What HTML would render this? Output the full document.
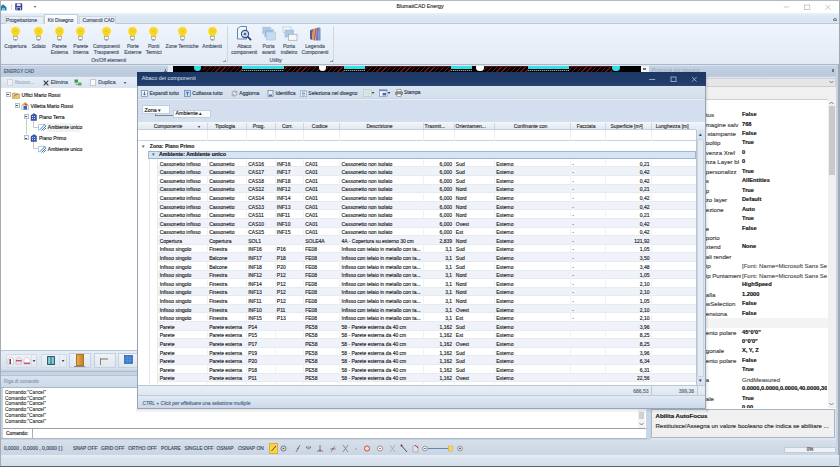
<!DOCTYPE html><html><head><meta charset="utf-8"><style>
html,body{margin:0;padding:0;}
body{width:840px;height:467px;overflow:hidden;position:relative;background:#dde6f1;font-family:"Liberation Sans",sans-serif;font-size:5px;color:#333;-webkit-text-stroke-width:0.15px;}
div{position:absolute;box-sizing:border-box;}
.t{white-space:nowrap;line-height:1;transform:translateY(-50%);}
.r{white-space:nowrap;line-height:1;transform:translate(-100%,-50%);}
.c{white-space:nowrap;line-height:1;transform:translate(-50%,-50%);text-align:center;}
</style></head><body>
<div style="left:0px;top:0px;width:840px;height:1px;background:#b8b8b8"></div>
<div style="left:0px;top:1px;width:840px;height:12px;background:#ffffff"></div>
<svg style="position:absolute;left:0px;top:3px" width="7" height="8" viewBox="0 0 7 8"><path d="M0 7.5V4L3 1.2L6.5 4.2V7.5H4.6V5.2H2.2V7.5z" fill="#1f7fb0"/><path d="M2.2 5.2h2.4v2.3H2.2z" fill="#5ac0e8"/></svg>
<div style="left:10.5px;top:4px;width:0.6px;height:6px;background:#d8d8d8"></div>
<svg style="position:absolute;left:15px;top:3px" width="7.5" height="7.5" viewBox="0 0 7.5 7.5"><rect x="0.2" y="0.2" width="7" height="7" rx="0.6" fill="#3b3f8f"/><rect x="1.8" y="0.6" width="3.8" height="2.4" fill="#e8eaf6"/><rect x="1.5" y="4.2" width="4.5" height="3" fill="#c8cce8"/><rect x="2.3" y="4.8" width="2.8" height="2.4" fill="#3b3f8f"/></svg>
<div class="t" style="left:34px;top:7px;font-size:4px;color:#555">▾</div>
<div class="c" style="left:420px;top:7.3px;font-size:5.3px;color:#333">BlumatiCAD Energy</div>
<svg style="position:absolute;left:782px;top:3px" width="52" height="9" viewBox="0 0 52 9"><path d="M1.8 4h5" stroke="#b4b4b4" stroke-width="0.7"/><rect x="22.4" y="2" width="5.4" height="4.6" fill="none" stroke="#b4b4b4" stroke-width="0.7"/><path d="M43.3 2l5.2 4.6M48.5 2l-5.2 4.6" stroke="#b4b4b4" stroke-width="0.7"/></svg>
<div style="left:1px;top:13px;width:838px;height:11px;background:linear-gradient(#e9f1fa,#dce7f4 30%,#d9e5f3)"></div>
<div style="left:1px;top:23.3px;width:838px;height:1px;background:#bccad9"></div>
<div style="left:4.5px;top:15.5px;width:39px;height:8.5px;background:linear-gradient(#e9f0f8,#e2eaf4);border:0.7px solid #cdd8e4;border-bottom:none"></div>
<div class="c" style="left:21.5px;top:20px;color:#4a5566">Progettazione</div>
<div style="left:43.5px;top:14px;width:34.5px;height:10.5px;background:linear-gradient(#fbfdff,#eef5fc);border:0.8px solid #bfcddc;border-bottom:none"></div>
<div class="c" style="left:60.5px;top:19.8px;color:#3a4556">Kit Disegno</div>
<div style="left:78.5px;top:15.5px;width:37px;height:8.5px;background:linear-gradient(#e9f0f8,#e2eaf4);border:0.7px solid #cdd8e4;border-bottom:none"></div>
<div class="c" style="left:98.5px;top:20px;color:#4a5566">Comandi CAD</div>
<div style="left:832px;top:17px;width:6px;height:5px;background:transparent"><div style="left:1px;top:1px;width:4px;height:3px;border:0.7px solid #777;border-radius:2px 2px 0 0"></div></div>
<div style="left:1px;top:24px;width:838px;height:41px;background:linear-gradient(#eef5fd 0%,#e9f0f9 40%,#e3eaf4 100%)"></div>
<div style="left:1px;top:63.6px;width:838px;height:1.6px;background:#a9b8ca"></div>
<svg style="position:absolute;left:9.9px;top:26px" width="11" height="15" viewBox="0 0 11 15">
<path d="M5.5 0.3C2.4 0.3 0.4 2.3 0.4 4.9c0 2.3 1.6 3.6 2.3 5.2v1h5.6v-1c0.7-1.6 2.3-2.9 2.3-5.2C10.6 2.3 8.6 0.3 5.5 0.3z" fill="#fbf0a8"/>
<path d="M5.5 1.2C3 1.2 1.3 2.9 1.3 5c0 2 1.5 3.2 2.1 4.7v0.8h4.2V9.7c0.6-1.5 2.1-2.7 2.1-4.7C9.7 2.9 8 1.2 5.5 1.2z" fill="#f4d62a"/>
<path d="M4 4.5l1.5 1.5 1.5-1.5" fill="none" stroke="#e0a818" stroke-width="0.5"/>
<rect x="3.7" y="10.5" width="3.6" height="3" fill="#f4f4f4" stroke="#8a8a8a" stroke-width="0.5"/>
<rect x="4.3" y="13.5" width="2.4" height="1" fill="#7a7a7a"/>
</svg>
<div class="c" style="left:15.4px;top:46.0px;color:#465266">Copertura</div>
<svg style="position:absolute;left:33.1px;top:26px" width="11" height="15" viewBox="0 0 11 15">
<path d="M5.5 0.3C2.4 0.3 0.4 2.3 0.4 4.9c0 2.3 1.6 3.6 2.3 5.2v1h5.6v-1c0.7-1.6 2.3-2.9 2.3-5.2C10.6 2.3 8.6 0.3 5.5 0.3z" fill="#fbf0a8"/>
<path d="M5.5 1.2C3 1.2 1.3 2.9 1.3 5c0 2 1.5 3.2 2.1 4.7v0.8h4.2V9.7c0.6-1.5 2.1-2.7 2.1-4.7C9.7 2.9 8 1.2 5.5 1.2z" fill="#f4d62a"/>
<path d="M4 4.5l1.5 1.5 1.5-1.5" fill="none" stroke="#e0a818" stroke-width="0.5"/>
<rect x="3.7" y="10.5" width="3.6" height="3" fill="#f4f4f4" stroke="#8a8a8a" stroke-width="0.5"/>
<rect x="4.3" y="13.5" width="2.4" height="1" fill="#7a7a7a"/>
</svg>
<div class="c" style="left:38.6px;top:46.0px;color:#465266">Solaio</div>
<svg style="position:absolute;left:53.8px;top:26px" width="11" height="15" viewBox="0 0 11 15">
<path d="M5.5 0.3C2.4 0.3 0.4 2.3 0.4 4.9c0 2.3 1.6 3.6 2.3 5.2v1h5.6v-1c0.7-1.6 2.3-2.9 2.3-5.2C10.6 2.3 8.6 0.3 5.5 0.3z" fill="#fbf0a8"/>
<path d="M5.5 1.2C3 1.2 1.3 2.9 1.3 5c0 2 1.5 3.2 2.1 4.7v0.8h4.2V9.7c0.6-1.5 2.1-2.7 2.1-4.7C9.7 2.9 8 1.2 5.5 1.2z" fill="#f4d62a"/>
<path d="M4 4.5l1.5 1.5 1.5-1.5" fill="none" stroke="#e0a818" stroke-width="0.5"/>
<rect x="3.7" y="10.5" width="3.6" height="3" fill="#f4f4f4" stroke="#8a8a8a" stroke-width="0.5"/>
<rect x="4.3" y="13.5" width="2.4" height="1" fill="#7a7a7a"/>
</svg>
<div class="c" style="left:59.3px;top:46.0px;color:#465266">Parete</div>
<div class="c" style="left:59.3px;top:51.9px;color:#465266">Esterna</div>
<svg style="position:absolute;left:75.2px;top:26px" width="11" height="15" viewBox="0 0 11 15">
<path d="M5.5 0.3C2.4 0.3 0.4 2.3 0.4 4.9c0 2.3 1.6 3.6 2.3 5.2v1h5.6v-1c0.7-1.6 2.3-2.9 2.3-5.2C10.6 2.3 8.6 0.3 5.5 0.3z" fill="#fbf0a8"/>
<path d="M5.5 1.2C3 1.2 1.3 2.9 1.3 5c0 2 1.5 3.2 2.1 4.7v0.8h4.2V9.7c0.6-1.5 2.1-2.7 2.1-4.7C9.7 2.9 8 1.2 5.5 1.2z" fill="#f4d62a"/>
<path d="M4 4.5l1.5 1.5 1.5-1.5" fill="none" stroke="#e0a818" stroke-width="0.5"/>
<rect x="3.7" y="10.5" width="3.6" height="3" fill="#f4f4f4" stroke="#8a8a8a" stroke-width="0.5"/>
<rect x="4.3" y="13.5" width="2.4" height="1" fill="#7a7a7a"/>
</svg>
<div class="c" style="left:80.7px;top:46.0px;color:#465266">Parete</div>
<div class="c" style="left:80.7px;top:51.9px;color:#465266">Interna</div>
<svg style="position:absolute;left:100.9px;top:26px" width="11" height="15" viewBox="0 0 11 15">
<path d="M5.5 0.3C2.4 0.3 0.4 2.3 0.4 4.9c0 2.3 1.6 3.6 2.3 5.2v1h5.6v-1c0.7-1.6 2.3-2.9 2.3-5.2C10.6 2.3 8.6 0.3 5.5 0.3z" fill="#fbf0a8"/>
<path d="M5.5 1.2C3 1.2 1.3 2.9 1.3 5c0 2 1.5 3.2 2.1 4.7v0.8h4.2V9.7c0.6-1.5 2.1-2.7 2.1-4.7C9.7 2.9 8 1.2 5.5 1.2z" fill="#f4d62a"/>
<path d="M4 4.5l1.5 1.5 1.5-1.5" fill="none" stroke="#e0a818" stroke-width="0.5"/>
<rect x="3.7" y="10.5" width="3.6" height="3" fill="#f4f4f4" stroke="#8a8a8a" stroke-width="0.5"/>
<rect x="4.3" y="13.5" width="2.4" height="1" fill="#7a7a7a"/>
</svg>
<div class="c" style="left:106.4px;top:46.0px;color:#465266">Componenti</div>
<div class="c" style="left:106.4px;top:51.9px;color:#465266">Trasparenti</div>
<svg style="position:absolute;left:127.4px;top:26px" width="11" height="15" viewBox="0 0 11 15">
<path d="M5.5 0.3C2.4 0.3 0.4 2.3 0.4 4.9c0 2.3 1.6 3.6 2.3 5.2v1h5.6v-1c0.7-1.6 2.3-2.9 2.3-5.2C10.6 2.3 8.6 0.3 5.5 0.3z" fill="#fbf0a8"/>
<path d="M5.5 1.2C3 1.2 1.3 2.9 1.3 5c0 2 1.5 3.2 2.1 4.7v0.8h4.2V9.7c0.6-1.5 2.1-2.7 2.1-4.7C9.7 2.9 8 1.2 5.5 1.2z" fill="#f4d62a"/>
<path d="M4 4.5l1.5 1.5 1.5-1.5" fill="none" stroke="#e0a818" stroke-width="0.5"/>
<rect x="3.7" y="10.5" width="3.6" height="3" fill="#f4f4f4" stroke="#8a8a8a" stroke-width="0.5"/>
<rect x="4.3" y="13.5" width="2.4" height="1" fill="#7a7a7a"/>
</svg>
<div class="c" style="left:132.9px;top:46.0px;color:#465266">Porte</div>
<div class="c" style="left:132.9px;top:51.9px;color:#465266">Esterne</div>
<svg style="position:absolute;left:148.1px;top:26px" width="11" height="15" viewBox="0 0 11 15">
<path d="M5.5 0.3C2.4 0.3 0.4 2.3 0.4 4.9c0 2.3 1.6 3.6 2.3 5.2v1h5.6v-1c0.7-1.6 2.3-2.9 2.3-5.2C10.6 2.3 8.6 0.3 5.5 0.3z" fill="#fbf0a8"/>
<path d="M5.5 1.2C3 1.2 1.3 2.9 1.3 5c0 2 1.5 3.2 2.1 4.7v0.8h4.2V9.7c0.6-1.5 2.1-2.7 2.1-4.7C9.7 2.9 8 1.2 5.5 1.2z" fill="#f4d62a"/>
<path d="M4 4.5l1.5 1.5 1.5-1.5" fill="none" stroke="#e0a818" stroke-width="0.5"/>
<rect x="3.7" y="10.5" width="3.6" height="3" fill="#f4f4f4" stroke="#8a8a8a" stroke-width="0.5"/>
<rect x="4.3" y="13.5" width="2.4" height="1" fill="#7a7a7a"/>
</svg>
<div class="c" style="left:153.6px;top:46.0px;color:#465266">Ponti</div>
<div class="c" style="left:153.6px;top:51.9px;color:#465266">Termici</div>
<svg style="position:absolute;left:176.6px;top:26px" width="11" height="15" viewBox="0 0 11 15">
<path d="M5.5 0.3C2.4 0.3 0.4 2.3 0.4 4.9c0 2.3 1.6 3.6 2.3 5.2v1h5.6v-1c0.7-1.6 2.3-2.9 2.3-5.2C10.6 2.3 8.6 0.3 5.5 0.3z" fill="#fbf0a8"/>
<path d="M5.5 1.2C3 1.2 1.3 2.9 1.3 5c0 2 1.5 3.2 2.1 4.7v0.8h4.2V9.7c0.6-1.5 2.1-2.7 2.1-4.7C9.7 2.9 8 1.2 5.5 1.2z" fill="#f4d62a"/>
<path d="M4 4.5l1.5 1.5 1.5-1.5" fill="none" stroke="#e0a818" stroke-width="0.5"/>
<rect x="3.7" y="10.5" width="3.6" height="3" fill="#f4f4f4" stroke="#8a8a8a" stroke-width="0.5"/>
<rect x="4.3" y="13.5" width="2.4" height="1" fill="#7a7a7a"/>
</svg>
<div class="c" style="left:182.1px;top:46.0px;color:#465266">Zone Termiche</div>
<svg style="position:absolute;left:206.6px;top:26px" width="11" height="15" viewBox="0 0 11 15">
<path d="M5.5 0.3C2.4 0.3 0.4 2.3 0.4 4.9c0 2.3 1.6 3.6 2.3 5.2v1h5.6v-1c0.7-1.6 2.3-2.9 2.3-5.2C10.6 2.3 8.6 0.3 5.5 0.3z" fill="#fbf0a8"/>
<path d="M5.5 1.2C3 1.2 1.3 2.9 1.3 5c0 2 1.5 3.2 2.1 4.7v0.8h4.2V9.7c0.6-1.5 2.1-2.7 2.1-4.7C9.7 2.9 8 1.2 5.5 1.2z" fill="#f4d62a"/>
<path d="M4 4.5l1.5 1.5 1.5-1.5" fill="none" stroke="#e0a818" stroke-width="0.5"/>
<rect x="3.7" y="10.5" width="3.6" height="3" fill="#f4f4f4" stroke="#8a8a8a" stroke-width="0.5"/>
<rect x="4.3" y="13.5" width="2.4" height="1" fill="#7a7a7a"/>
</svg>
<div class="c" style="left:212.1px;top:46.0px;color:#465266">Ambienti</div>
<div class="c" style="left:108.7px;top:60px;color:#46566e">On/Off elementi</div>
<div style="left:222px;top:58.5px;width:4px;height:4px;"><div style="left:1px;top:1px;width:2.5px;height:2.5px;border-right:0.6px solid #8a98aa;border-bottom:0.6px solid #8a98aa"></div></div>
<div style="left:226.5px;top:26px;width:0.8px;height:37px;background:#cdd8e4"></div>
<div class="c" style="left:244.3px;top:46.0px;color:#465266">Abaco</div>
<div class="c" style="left:244.3px;top:51.9px;color:#465266">componenti</div>
<div class="c" style="left:268.6px;top:46.0px;color:#465266">Porta</div>
<div class="c" style="left:268.6px;top:51.9px;color:#465266">avanti</div>
<div class="c" style="left:289px;top:46.0px;color:#465266">Porta</div>
<div class="c" style="left:289px;top:51.9px;color:#465266">indietro</div>
<div class="c" style="left:315px;top:46.0px;color:#465266">Legenda</div>
<div class="c" style="left:315px;top:51.9px;color:#465266">Componenti</div>
<div class="c" style="left:275.7px;top:60px;color:#46566e">Utility</div>
<div style="left:329px;top:58.5px;width:4px;height:4px;"><div style="left:1px;top:1px;width:2.5px;height:2.5px;border-right:0.6px solid #8a98aa;border-bottom:0.6px solid #8a98aa"></div></div>
<div style="left:333px;top:26px;width:0.8px;height:37px;background:#cdd8e4"></div>
<svg style="position:absolute;left:236px;top:26px" width="17" height="15" viewBox="0 0 17 15">
<path d="M1.5 2.5l3-2h6v12.5h-9z" fill="#f4f8fc" stroke="#4a78b0" stroke-width="0.9"/>
<circle cx="9" cy="8" r="3.6" fill="#cfe0f0" stroke="#2c4e80" stroke-width="1.1"/>
<circle cx="9" cy="8" r="1.3" fill="#6a4aa0"/>
<path d="M11.6 10.6l3.5 3.5" stroke="#24406a" stroke-width="1.6"/>
</svg>
<svg style="position:absolute;left:261px;top:26px" width="16" height="15" viewBox="0 0 16 15">
<rect x="1.5" y="1" width="8.5" height="7" fill="#a9c6e4" stroke="#c5d5e6" stroke-width="0.6"/>
<rect x="3.5" y="3.5" width="9" height="7.5" fill="#94bbe2" stroke="#c0d2e6" stroke-width="0.6"/>
<rect x="5.5" y="6" width="9" height="8" fill="#c4dcf2" stroke="#b8c8d8" stroke-width="0.7"/>
</svg>
<svg style="position:absolute;left:282px;top:26px" width="16" height="15" viewBox="0 0 16 15">
<rect x="1" y="1" width="8" height="5.5" fill="#f4f6f8" stroke="#b4c0cc" stroke-width="0.6"/>
<rect x="3" y="4" width="8.5" height="7" fill="#a9cae8" stroke="#9ab6d0" stroke-width="0.6"/>
<rect x="6.5" y="8.3" width="8.5" height="6" fill="#f6f6f6" stroke="#9aaabb" stroke-width="0.7"/>
</svg>
<svg style="position:absolute;left:308px;top:26px;opacity:0.8" width="14" height="15" viewBox="0 0 14 15">
<path d="M2 3.5l9-2.5v2l-9 3z" fill="#d8d0c0"/>
<path d="M2 4.5l3-1.5 -1 11-2-1z" fill="#3a3a6a"/>
<path d="M5 3.5l2-0.8 -1.5 11.5-1.5-0.5z" fill="#e07a30"/>
<path d="M7 2.7l2-0.7 -2 12.5-1.5-0.3z" fill="#b83a3a"/>
<path d="M9 2l2-0.5 -1 13h-2.5z" fill="#6a4a9a"/>
<path d="M11 1.5l1.5 0.3v12.7h-2.5z" fill="#3a8ab8"/>
</svg>
<div style="left:641px;top:66px;width:8px;height:6px;background:#f4f4f4"></div>
<div style="left:642.5px;top:68px;width:3px;height:2px;background:#777"></div>
<div style="left:173px;top:66px;width:468px;height:10px;background:#000;overflow:hidden"><div style="left:30px;top:0px;width:39px;height:6px;background:repeating-linear-gradient(135deg,#000 0 1.7px,#6a1818 1.7px 2.7px,#000 2.7px 3.4px);border-top:1.2px solid #561212"></div><div style="left:111px;top:0px;width:36px;height:6px;background:repeating-linear-gradient(135deg,#000 0 1.7px,#6a1818 1.7px 2.7px,#000 2.7px 3.4px);border-top:1.2px solid #561212"></div><div style="left:152px;top:0px;width:19px;height:6px;background:repeating-linear-gradient(135deg,#000 0 1.7px,#6a1818 1.7px 2.7px,#000 2.7px 3.4px);border-top:1.2px solid #561212"></div><div style="left:191px;top:0px;width:87px;height:6px;background:repeating-linear-gradient(135deg,#000 0 1.7px,#6a1818 1.7px 2.7px,#000 2.7px 3.4px);border-top:1.2px solid #561212"></div><div style="left:311px;top:0px;width:44px;height:6px;background:repeating-linear-gradient(135deg,#000 0 1.7px,#6a1818 1.7px 2.7px,#000 2.7px 3.4px);border-top:1.2px solid #561212"></div><div style="left:396px;top:0px;width:43px;height:6px;background:repeating-linear-gradient(135deg,#000 0 1.7px,#6a1818 1.7px 2.7px,#000 2.7px 3.4px);border-top:1.2px solid #561212"></div><div style="left:69px;top:-0.20000000000000284px;width:42px;height:3.2px;background:#34e0e6"></div><div style="left:69px;top:3.799999999999997px;width:42px;height:1.2px;background:repeating-linear-gradient(90deg,#a0a0a0 0 1px,#333 1px 2px)"></div><div style="left:171px;top:-0.20000000000000284px;width:20.5px;height:3.2px;background:#34e0e6"></div><div style="left:171px;top:3.799999999999997px;width:20.5px;height:1.2px;background:repeating-linear-gradient(90deg,#a0a0a0 0 1px,#333 1px 2px)"></div><div style="left:278px;top:-0.20000000000000284px;width:21px;height:3.2px;background:#34e0e6"></div><div style="left:278px;top:3.799999999999997px;width:21px;height:1.2px;background:repeating-linear-gradient(90deg,#a0a0a0 0 1px,#333 1px 2px)"></div><div style="left:355px;top:-0.20000000000000284px;width:41px;height:3.2px;background:#34e0e6"></div><div style="left:355px;top:3.799999999999997px;width:41px;height:1.2px;background:repeating-linear-gradient(90deg,#a0a0a0 0 1px,#333 1px 2px)"></div><div style="left:20.900000000000006px;top:-2px;width:7.2px;height:7.2px;background:#30e0e6;border-radius:50%"></div><div style="left:439.4px;top:-2px;width:7.2px;height:7.2px;background:#30e0e6;border-radius:50%"></div><div style="left:145.89999999999998px;top:-2px;width:7.2px;height:7.2px;background:#ffffff;border-radius:50%"></div><div style="left:303.4px;top:-2px;width:7.2px;height:7.2px;background:#ffffff;border-radius:50%"></div></div>
<div style="left:0px;top:1px;width:1px;height:466px;background:#a4acb6"></div>
<div style="left:1px;top:65.2px;width:170px;height:12px;background:linear-gradient(#dae3ee 0,#dae3ee 0.8px,#c3d1e2 1.2px,#b9cadc 80%,#c2d0e1)"></div>
<div class="t" style="left:3.8px;top:72px;font-size:4.6px;color:#4a5c76">ENERGY CAD</div>
<div style="left:168px;top:65.2px;width:5px;height:12px;background:#e4ebf3"></div>
<div style="left:164.8px;top:68.8px;width:1.6px;height:2.6px;background:#6a7888"></div>
<div style="left:164.2px;top:71.2px;width:2.8px;height:0.6px;background:#6a7888"></div>
<div style="left:1px;top:77px;width:170px;height:11px;background:linear-gradient(#e6eef8,#d9e4f1)"></div>
<div style="left:6.5px;top:79.2px;width:6px;height:6.5px;background:#eef0f3;border:0.6px solid #d0d4da"></div>
<div class="t" style="left:15px;top:82.6px;color:#a8b0bc;font-size:5.2px">Nuovo...</div>
<svg style="position:absolute;left:42.5px;top:79.5px" width="6" height="6" viewBox="0 0 6 6"><path d="M0.7 0.7L5.3 5.3M5.3 0.7L0.7 5.3" stroke="#333" stroke-width="1.1"/></svg>
<div class="t" style="left:50.8px;top:83px;color:#3e4c62;font-size:5.2px">Elimina</div>
<svg style="position:absolute;left:74px;top:79px" width="8" height="7" viewBox="0 0 8 7"><rect x="0.5" y="0.5" width="3.5" height="3" fill="#3a9a4a"/><rect x="4" y="3.5" width="3.5" height="3" fill="#5ab05a"/><path d="M2 3.5v2h2" stroke="#555" stroke-width="0.5" fill="none"/></svg>
<div style="left:90px;top:79px;width:6px;height:7px;background:#fbfbfb;border:0.6px solid #c8c8c8"></div>
<div class="t" style="left:98.3px;top:83px;color:#3e4c62;font-size:5.2px">Duplica</div>
<div class="c" style="left:125px;top:82.5px;font-size:4px;color:#444">▾</div>
<div style="left:1px;top:88px;width:170px;height:262px;background:#ffffff"></div>
<div style="left:5.5px;top:92.2px;width:5px;height:5px;background:#f2f4f6;border:1px solid #b4bcc6"><div style="left:0.5px;top:1.2px;width:2px;height:0.8px;background:#555"></div></div>
<svg style="position:absolute;left:12px;top:90.5px" width="8" height="8" viewBox="0 0 8 8"><path d="M0.5 2h3l1 1h3v4.5h-7z" fill="#e8c860" stroke="#a88a30" stroke-width="0.5"/><path d="M2 5.5c1-2 3-2 4-3" stroke="#4a6a9a" stroke-width="0.8" fill="none"/></svg>
<div class="t" style="left:21.6px;top:94.8px;color:#222">Uffici Mario Rossi</div>
<div style="left:14.5px;top:103.2px;width:5px;height:5px;background:#f2f4f6;border:1px solid #b4bcc6"><div style="left:0.5px;top:1.2px;width:2px;height:0.8px;background:#555"></div></div>
<svg style="position:absolute;left:21px;top:101.7px" width="8" height="8" viewBox="0 0 8 8"><path d="M4 0.5L7.5 3.5V7.5H0.5V3.5z" fill="#f4f4f4" stroke="#888" stroke-width="0.4"/><path d="M4 0.5L7.5 3.5H4z" fill="#e04a2a"/><path d="M0.5 3.5L4 0.5V3.5z" fill="#f0a030"/><rect x="2.5" y="4" width="3.5" height="3.5" fill="#2a6ac0"/></svg>
<div class="t" style="left:30.5px;top:105.8px;color:#222">Villetta Mario Rossi</div>
<div style="left:25.5px;top:119px;width:0.8px;height:15px;background:#c9c9c9"></div>
<div style="left:33.3px;top:120.5px;width:0.8px;height:6.8px;background:#c9c9c9"></div>
<div style="left:33.3px;top:127px;width:4.5px;height:0.8px;background:#c9c9c9"></div>
<div style="left:33.3px;top:141.3px;width:0.8px;height:7px;background:#c9c9c9"></div>
<div style="left:33.3px;top:147.8px;width:4.5px;height:0.8px;background:#c9c9c9"></div>
<div style="left:23.5px;top:114.2px;width:5px;height:5px;background:#f2f4f6;border:1px solid #b4bcc6"><div style="left:0.5px;top:1.2px;width:2px;height:0.8px;background:#555"></div></div>
<svg style="position:absolute;left:30px;top:112.7px" width="7" height="8" viewBox="0 0 7 8"><path d="M1 2.5L4 0.5L6.5 2V7.5H1z" fill="#3a5ab0" stroke="#1a3080" stroke-width="0.4"/><rect x="2" y="3" width="1" height="1" fill="#cde"/><rect x="4" y="3" width="1" height="1" fill="#cde"/><rect x="2" y="5" width="1" height="1" fill="#cde"/><rect x="4" y="5" width="1" height="1" fill="#cde"/></svg>
<div class="t" style="left:39px;top:116.7px;color:#222">Piano Terra</div>
<svg style="position:absolute;left:37.8px;top:123.3px" width="9" height="8" viewBox="0 0 9 8"><path d="M0.5 7.5V1.5h6" fill="none" stroke="#8ab8e0" stroke-width="0.7"/><path d="M1.5 7L6.5 2M3.5 7.5L8 3M5.5 7.5L8 5" stroke="#2f6fb8" stroke-width="0.9"/><path d="M6 0.8l2 2" stroke="#2f6fb8" stroke-width="0.8"/></svg>
<div style="left:46.5px;top:122.5px;width:33.5px;height:9px;background:#f0f2f5"></div>
<div class="t" style="left:47.8px;top:127.4px;color:#222">Ambiente unico</div>
<div style="left:23.5px;top:135.4px;width:5px;height:5px;background:#f2f4f6;border:1px solid #b4bcc6"><div style="left:0.5px;top:1.2px;width:2px;height:0.8px;background:#555"></div></div>
<svg style="position:absolute;left:30px;top:133.8px" width="7" height="8" viewBox="0 0 7 8"><path d="M1 2.5L4 0.5L6.5 2V7.5H1z" fill="#3a5ab0" stroke="#1a3080" stroke-width="0.4"/><rect x="2" y="3" width="1" height="1" fill="#cde"/><rect x="4" y="3" width="1" height="1" fill="#cde"/><rect x="2" y="5" width="1" height="1" fill="#cde"/><rect x="4" y="5" width="1" height="1" fill="#cde"/></svg>
<div class="t" style="left:39px;top:138.3px;color:#222">Piano Primo</div>
<svg style="position:absolute;left:37.8px;top:144.5px" width="9" height="8" viewBox="0 0 9 8"><path d="M0.5 7.5V1.5h6" fill="none" stroke="#8ab8e0" stroke-width="0.7"/><path d="M1.5 7L6.5 2M3.5 7.5L8 3M5.5 7.5L8 5" stroke="#2f6fb8" stroke-width="0.9"/><path d="M6 0.8l2 2" stroke="#2f6fb8" stroke-width="0.8"/></svg>
<div class="t" style="left:47.8px;top:149px;color:#222">Ambiente unico</div>
<div style="left:1px;top:350px;width:170px;height:19px;background:linear-gradient(#e6edf6,#d8e2ef)"></div>
<div style="left:1px;top:350px;width:170px;height:1px;background:#b9c5d3"></div>
<div style="left:5.8px;top:353.5px;width:31.7px;height:14px;background:linear-gradient(#edf2f8,#dfe7f1);border:0.5px solid #d0d9e4;border-radius:1px"></div>
<div style="left:31px;top:354px;width:0.5px;height:13px;background:#d8e0ea"></div>
<svg style="position:absolute;left:7px;top:356px" width="24" height="9" viewBox="0 0 24 9"><path d="M1 3.5L3.8 1L6.6 3.5V8H1z" fill="#fff" stroke="#b0a0a8" stroke-width="0.5"/><path d="M3.2 3v5" stroke="#701828" stroke-width="1.3"/><path d="M9 3.5L11.8 1L14.6 3.5V8H9z" fill="#f8e8ec" stroke="#b0a0a8" stroke-width="0.5"/><path d="M9 4.8h5.6" stroke="#c02040" stroke-width="1.1"/><path d="M17 3.5L20 1L23 3.5V8H17z" fill="#fff" stroke="#b8a8b0" stroke-width="0.5"/><path d="M17 7.2h6" stroke="#c02040" stroke-width="1.1"/></svg>
<div class="c" style="left:34.2px;top:360.8px;font-size:4px;color:#222">▾</div>
<div style="left:41px;top:353.5px;width:25.5px;height:14px;background:linear-gradient(#edf2f8,#dfe7f1);border:0.5px solid #d0d9e4;border-radius:1px"></div>
<div style="left:59px;top:354px;width:0.5px;height:13px;background:#d8e0ea"></div>
<svg style="position:absolute;left:46.5px;top:355.5px" width="8" height="9" viewBox="0 0 8 9"><rect x="0.6" y="0.6" width="6.8" height="7.8" fill="#80d0e0" stroke="#2a5060" stroke-width="1"/><path d="M4 0.6v7.8" stroke="#2a5060" stroke-width="0.9"/></svg>
<div class="c" style="left:62.8px;top:360.8px;font-size:4px;color:#222">▾</div>
<div style="left:69px;top:352.5px;width:22px;height:15.5px;background:linear-gradient(#eef3f9,#dfe7f1);border:0.5px solid #c5d0dd"></div>
<div style="left:75.5px;top:354px;width:8.3px;height:12px;background:linear-gradient(90deg,#e6a850,#c88030);border:0.5px solid #b07020"></div>
<div style="left:74px;top:366px;width:11px;height:1px;background:#8a8a8a"></div>
<div style="left:94px;top:352.5px;width:22px;height:15.5px;background:linear-gradient(#eef3f9,#dfe7f1);border:0.5px solid #c5d0dd"></div>
<div style="left:100px;top:358px;width:1px;height:7px;background:#8a8070"></div>
<div style="left:101px;top:358px;width:7px;height:2px;background:#b8b0a0"></div>
<div style="left:118px;top:352.5px;width:22px;height:15.5px;background:linear-gradient(#eef3f9,#dfe7f1);border:0.5px solid #c5d0dd"></div>
<svg style="position:absolute;left:123.5px;top:355px" width="9" height="9" viewBox="0 0 9 9"><rect x="0.5" y="0.5" width="8" height="8" fill="#3a78c8" stroke="#1a4a90" stroke-width="0.6"/><path d="M3.2 0.5v8M5.8 0.5v8M0.5 3.2h8M0.5 5.8h8" stroke="#7ab0e8" stroke-width="0.4"/></svg>
<div style="left:1px;top:368.5px;width:646px;height:2px;background:#c8d5e4"></div>
<div style="left:1px;top:370.5px;width:646px;height:1.5px;background:#aab9cc"></div>
<div style="left:1px;top:372px;width:646px;height:3px;background:#c5d3e3"></div>
<div style="left:1px;top:375.4px;width:646px;height:1px;background:#b4c2d2"></div>
<div style="left:649px;top:65.2px;width:186.5px;height:12px;background:linear-gradient(#dae3ee 0,#dae3ee 0.8px,#c3d1e2 1.2px,#b9cadc 80%,#c2d0e1)"></div>
<div class="t" style="left:651.5px;top:71px;font-size:5.1px;color:#9aa9bb;-webkit-text-stroke-width:0">Proprietà del disegno</div>
<div style="left:832.2px;top:68.8px;width:1.6px;height:2.6px;background:#6a7888"></div>
<div style="left:831.6px;top:71.2px;width:2.8px;height:0.6px;background:#6a7888"></div>
<div style="left:651px;top:77.5px;width:184.5px;height:9.5px;background:#e6e6e6;border:0.5px solid #cfcfcf"></div>
<svg style="position:absolute;left:828.5px;top:80px" width="5" height="4" viewBox="0 0 5 4"><path d="M0.5 1L2.5 3L4.5 1" fill="none" stroke="#555" stroke-width="0.7"/></svg>
<div style="left:651px;top:87px;width:184.5px;height:11.5px;background:#f0f0f0"></div>
<div style="left:651px;top:98.5px;width:184.5px;height:310.5px;background:#fff;border-top:0.5px solid #d0d0d0"></div>
<div style="left:827.5px;top:99px;width:8.5px;height:309px;background:#f0f0f0"></div>
<div style="left:828.5px;top:106px;width:6.5px;height:69px;background:#c9c9c9"></div>
<svg style="position:absolute;left:829.0px;top:101px" width="5" height="4" viewBox="0 0 5 4"><path d="M0.5 3L2.5 1L4.5 3" fill="none" stroke="#555" stroke-width="0.7"/></svg>
<svg style="position:absolute;left:829.0px;top:402px" width="5" height="4" viewBox="0 0 5 4"><path d="M0.5 1L2.5 3L4.5 1" fill="none" stroke="#555" stroke-width="0.7"/></svg>
<div style="left:706px;top:318.41px;width:121.5px;height:9.4px;background:#f3f3f3"></div>
<div style="left:651px;top:99px;width:89.5px;height:309.2px;overflow:hidden"><div class="t" style="left:54.799999999999955px;top:16.099999999999994px;font-size:6.1px;color:#444">tus</div><div class="t" style="left:54.799999999999955px;top:25.554999999999993px;font-size:6.1px;color:#444">magine salv</div><div class="t" style="left:51.299999999999955px;top:35.00999999999999px;font-size:6.1px;color:#444">e stampante</div><div class="t" style="left:54.799999999999955px;top:44.465px;font-size:6.1px;color:#444">ooltip</div><div class="t" style="left:54.799999999999955px;top:53.91999999999999px;font-size:6.1px;color:#444">venza Xref</div><div class="t" style="left:54.799999999999955px;top:63.375px;font-size:6.1px;color:#444">nza Layer bl</div><div class="t" style="left:51.799999999999955px;top:72.82999999999998px;font-size:6.1px;color:#444">i personalizz</div><div class="t" style="left:54.799999999999955px;top:82.285px;font-size:6.1px;color:#444">s</div><div class="t" style="left:54.799999999999955px;top:91.74000000000001px;font-size:6.1px;color:#444">p</div><div class="t" style="left:54.799999999999955px;top:101.195px;font-size:6.1px;color:#444">zo layer</div><div class="t" style="left:54.799999999999955px;top:110.64999999999998px;font-size:6.1px;color:#444">ezione</div><div class="t" style="left:54.799999999999955px;top:129.56px;font-size:6.1px;color:#444">e</div><div class="t" style="left:54.799999999999955px;top:139.015px;font-size:6.1px;color:#444">porto</div><div class="t" style="left:54.799999999999955px;top:148.47px;font-size:6.1px;color:#444">xtend</div><div class="t" style="left:54.799999999999955px;top:157.92499999999995px;font-size:6.1px;color:#444">ali render</div><div class="t" style="left:54.799999999999955px;top:167.38px;font-size:6.1px;color:#444">ip</div><div class="t" style="left:54.799999999999955px;top:176.83500000000004px;font-size:6.1px;color:#444">ip Puntamento</div><div class="t" style="left:54.799999999999955px;top:195.745px;font-size:6.1px;color:#444">alla</div><div class="t" style="left:54.799999999999955px;top:205.2px;font-size:6.1px;color:#444">wSelection</div><div class="t" style="left:54.799999999999955px;top:214.65499999999997px;font-size:6.1px;color:#444">ensiona</div><div class="t" style="left:54.799999999999955px;top:233.565px;font-size:6.1px;color:#444">ento polare</div><div class="t" style="left:54.799999999999955px;top:252.47500000000002px;font-size:6.1px;color:#444">gonale</div><div class="t" style="left:54.799999999999955px;top:261.93px;font-size:6.1px;color:#444">ento polare</div><div class="t" style="left:54.799999999999955px;top:280.84000000000003px;font-size:6.1px;color:#444">a</div><div class="t" style="left:54.799999999999955px;top:299.75px;font-size:6.1px;color:#444">ale</div></div>
<div style="left:741px;top:99px;width:86px;height:309.2px;overflow:hidden"><div class="t" style="left:1px;top:16.099999999999994px;font-size:5.7px;color:#111;font-weight:bold">False</div><div class="t" style="left:1px;top:25.554999999999993px;font-size:5.7px;color:#111;font-weight:bold">768</div><div class="t" style="left:1px;top:35.00999999999999px;font-size:5.7px;color:#111;font-weight:bold">False</div><div class="t" style="left:1px;top:44.465px;font-size:5.7px;color:#111;font-weight:bold">True</div><div class="t" style="left:1px;top:53.91999999999999px;font-size:5.7px;color:#111;font-weight:bold">0</div><div class="t" style="left:1px;top:63.375px;font-size:5.7px;color:#111;font-weight:bold">0</div><div class="t" style="left:1px;top:72.82999999999998px;font-size:5.7px;color:#111;font-weight:bold">True</div><div class="t" style="left:1px;top:82.285px;font-size:5.7px;color:#111;font-weight:bold">AllEntities</div><div class="t" style="left:1px;top:91.74000000000001px;font-size:5.7px;color:#111;font-weight:bold">True</div><div class="t" style="left:1px;top:101.195px;font-size:5.7px;color:#111;font-weight:bold">Default</div><div class="t" style="left:1px;top:110.64999999999998px;font-size:5.7px;color:#111;font-weight:bold">Auto</div><div class="t" style="left:1px;top:120.10499999999999px;font-size:5.7px;color:#111;font-weight:bold">True</div><div class="t" style="left:1px;top:129.56px;font-size:5.7px;color:#111;font-weight:bold">False</div><div class="t" style="left:1px;top:148.47px;font-size:5.7px;color:#111;font-weight:bold">None</div><div class="t" style="left:1px;top:167.38px;font-size:6px;color:#555">[Font: Name=Microsoft Sans Serif</div><div class="t" style="left:1px;top:176.83500000000004px;font-size:6px;color:#555">[Font: Name=Microsoft Sans Serif</div><div class="t" style="left:1px;top:186.28999999999996px;font-size:5.7px;color:#111;font-weight:bold">HighSpeed</div><div class="t" style="left:1px;top:195.745px;font-size:5.7px;color:#111;font-weight:bold">1.2000</div><div class="t" style="left:1px;top:205.2px;font-size:5.7px;color:#111;font-weight:bold">False</div><div class="t" style="left:1px;top:214.65499999999997px;font-size:5.7px;color:#111;font-weight:bold">False</div><div class="t" style="left:1px;top:233.565px;font-size:5.7px;color:#111;font-weight:bold">45°0'0"</div><div class="t" style="left:1px;top:243.01999999999998px;font-size:5.7px;color:#111;font-weight:bold">0°0'0"</div><div class="t" style="left:1px;top:252.47500000000002px;font-size:5.7px;color:#111;font-weight:bold">X, Y, Z</div><div class="t" style="left:1px;top:261.93px;font-size:5.7px;color:#111;font-weight:bold">False</div><div class="t" style="left:1px;top:271.385px;font-size:5.7px;color:#111;font-weight:bold">True</div><div class="t" style="left:1px;top:280.84000000000003px;font-size:6px;color:#555">GridMeasured</div><div class="t" style="left:1px;top:290.29499999999996px;font-size:5.7px;color:#111;font-weight:bold">0.0000,0.0000,0.0000,40.0000,30.0000</div><div class="t" style="left:1px;top:299.75px;font-size:5.7px;color:#111;font-weight:bold">True</div><div class="t" style="left:1px;top:309.20500000000004px;font-size:5.7px;color:#111;font-weight:bold">0.00</div></div>
<div style="left:651px;top:408.6px;width:184px;height:29.6px;background:#f0f0f0;border:0.6px solid #a9b6c6"></div>
<div class="t" style="left:655.5px;top:416px;font-size:6.1px;font-weight:bold;color:#111">Abilita AutoFocus</div>
<div class="t" style="left:655.5px;top:426px;font-size:6px;color:#333">Restituisce/Assegna un valore booleano che indica se abilitare ...</div>
<div style="left:646px;top:377px;width:5px;height:63px;background:#c9d6e5"></div>
<div style="left:1px;top:376.4px;width:646px;height:11px;background:linear-gradient(#d9e3ef,#cdd9e8)"></div>
<div class="t" style="left:3.8px;top:381.8px;font-size:4.7px;color:#8a9db6">Riga di comando</div>
<div style="left:1px;top:387px;width:646px;height:1px;background:#a9b8ca"></div>
<div style="left:1px;top:388px;width:645px;height:52px;background:#c5d2e1"></div>
<div style="left:2.8px;top:388px;width:643.2px;height:40.5px;background:#fff"></div>
<div style="left:5px;top:388.7px;font-size:9.7px;line-height:11.5px;color:#222;white-space:pre;transform:scale(0.5);transform-origin:0 0">Comando:"Cancel"<br>Comando:"Cancel"<br>Comando:"Cancel"<br>Comando:"Cancel"<br>Comando:"Cancel"<br>Comando:"Cancel"</div>
<div style="left:637.5px;top:388.5px;width:7px;height:39px;background:#f3f3f3"></div>
<div style="left:638.5px;top:412px;width:5px;height:7px;background:#d0d0d0"></div>
<svg style="position:absolute;left:638.5px;top:422px" width="5" height="4" viewBox="0 0 5 4"><path d="M0.5 1L2.5 3L4.5 1" fill="none" stroke="#555" stroke-width="0.7"/></svg>
<div style="left:2.8px;top:428.2px;width:643.2px;height:0.9px;background:#9aa0a8"></div>
<div style="left:2.8px;top:429px;width:643.2px;height:9.6px;background:#fff"></div>
<div style="left:2.8px;top:429px;width:30px;height:9.6px;background:#fff;border-right:0.7px solid #a8aeb8"></div>
<div class="t" style="left:6px;top:434px;font-size:4.85px;color:#222">Comando:</div>
<div style="left:1px;top:437.8px;width:646px;height:1.4px;background:#aeb8c4"></div>
<div style="left:1px;top:440px;width:838px;height:15px;background:linear-gradient(#d6dfea,#d0dae7 50%,#c9d5e3)"></div>
<div class="t" style="left:4px;top:449.2px;font-size:4.9px;color:#3b4a5e">0,0000 , 0,0000 , 0,0000 [ ]</div>
<div class="t" style="left:73px;top:449.2px;font-size:4.9px;color:#3b4a5e">SNAP OFF</div>
<div class="t" style="left:101px;top:449.2px;font-size:4.9px;color:#3b4a5e">GRID OFF</div>
<div class="t" style="left:128px;top:449.2px;font-size:4.9px;color:#3b4a5e">ORTHO OFF</div>
<div class="t" style="left:161px;top:449.2px;font-size:4.9px;color:#3b4a5e">POLARE</div>
<div class="t" style="left:184.5px;top:449.2px;font-size:4.9px;color:#3b4a5e">SINGLE OFF</div>
<div class="t" style="left:216.5px;top:449.2px;font-size:4.9px;color:#3b4a5e">OSNAP</div>
<div class="t" style="left:238px;top:449.2px;font-size:4.9px;color:#3b4a5e">OSNAP ON</div>
<div style="left:268.5px;top:443px;width:9.5px;height:11px;background:#f7d44a;border:0.5px solid #d9b030"></div>
<svg style="position:absolute;left:269px;top:444px" width="9" height="9" viewBox="0 0 9 9"><path d="M2.5 7L6.5 2.5" stroke="#6a4a10" stroke-width="1"/><circle cx="6.5" cy="2.5" r="0.7" fill="#c33"/></svg>
<svg style="position:absolute;left:280px;top:444px" width="185" height="9" viewBox="0 0 185 9"><path d="M-9 7L-4 2" stroke="#705010" stroke-width="1"/><circle cx="3.5" cy="4.5" r="2.6" fill="none" stroke="#556" stroke-width="0.7"/><circle cx="3.5" cy="4.5" r="0.8" fill="#a03030"/><path d="M16 8L20 1" stroke="#665" stroke-width="0.8"/><circle cx="18" cy="4.5" r="0.7" fill="#c33"/><path d="M26 3h5M26 3q2.5 4 5 0" fill="none" stroke="#666" stroke-width="0.7"/><path d="M40 1v6M37 7h6" stroke="#666" stroke-width="0.8"/><circle cx="40" cy="6" r="0.7" fill="#c33"/><path d="M51 8l4-6M50 5h6" stroke="#777" stroke-width="0.7"/><circle cx="53" cy="4.5" r="0.8" fill="#c33"/><path d="M63 1l5 7M68 1l-5 7" stroke="#777" stroke-width="0.8"/><circle cx="76" cy="5" r="0.9" fill="#d9a0a0"/><circle cx="87" cy="4.5" r="2.6" fill="#f8d8d0" stroke="#c04030" stroke-width="0.9"/><circle cx="100" cy="4.5" r="2.6" fill="#fff" stroke="#777" stroke-width="0.8"/><circle cx="100" cy="4.5" r="0.8" fill="#c33"/><path d="M110 1l5 7M115 1l-5 7" stroke="#999" stroke-width="0.6"/><path d="M121 1l6 7" stroke="#444" stroke-width="0.9"/><circle cx="121.5" cy="1.5" r="0.9" fill="#333"/><rect x="133" y="2" width="5" height="6" fill="#e8e0e0" stroke="#888" stroke-width="0.5"/><path d="M135 1l3 3" stroke="#c33" stroke-width="1"/><circle cx="145" cy="4.5" r="2.4" fill="#f4f4f4" stroke="#666" stroke-width="0.6"/><path d="M143.8 4.5h2.4" stroke="#333" stroke-width="0.6"/><path d="M148 4.5h21" stroke="#5a7ab0" stroke-width="0.9"/><rect x="168.5" y="2" width="4" height="5" fill="#f8d860" stroke="#c9a030" stroke-width="0.4"/><circle cx="180" cy="4.5" r="2.4" fill="#f4f4f4" stroke="#666" stroke-width="0.6"/><path d="M178.8 4.5h2.4M180 3.3v2.4" stroke="#333" stroke-width="0.6"/></svg>
<div style="left:784px;top:446.5px;width:52px;height:6px;background:#eef2f7;border:0.5px solid #c0ccd8"></div>
<div class="c" style="left:810px;top:449.5px;font-size:4.5px;color:#444">0%</div>
<div style="left:1px;top:455px;width:838px;height:11px;background:linear-gradient(#e6edf5,#dbe4ef 30%,#d4dfeb)"></div>
<div style="left:0px;top:466px;width:840px;height:1px;background:#5a6470"></div>
<div style="left:835.5px;top:65px;width:4.5px;height:390px;background:linear-gradient(90deg,#c8d5e4,#c2d0e0 55%,#9aaabd 60%,#9aaabd 80%,#c5d2e1 85%)"></div>
<div style="left:839px;top:1px;width:1px;height:466px;background:#a0a8b2"></div>
<div style="left:136px;top:409.2px;width:572.7px;height:4px;background:linear-gradient(rgba(0,0,0,0.10),rgba(0,0,0,0))"></div>
<div style="left:705.7px;top:74.7px;width:3px;height:337.5px;background:linear-gradient(90deg,rgba(0,0,0,0.10),rgba(0,0,0,0))"></div>
<div style="left:137px;top:71.7px;width:568.7px;height:337.5px;background:#d5e1ef;border:0.7px solid #98a4b4"></div>
<div style="left:137px;top:71.7px;width:568.7px;height:14.3px;background:linear-gradient(#1d3764,#213e6c 85%,#2a4676)"></div>
<div class="t" style="left:141.8px;top:79.4px;font-size:5.45px;color:#dfe6f2;-webkit-text-stroke-width:0">Abaco dei componenti</div>
<svg style="position:absolute;left:648px;top:75px" width="52" height="9" viewBox="0 0 52 9"><path d="M1.2 4.5h6" stroke="#aebcd0" stroke-width="0.8"/><rect x="23" y="2" width="5" height="4.6" fill="none" stroke="#aebcd0" stroke-width="0.8"/><path d="M44 2l4.6 4.6M48.6 2L44 6.6" stroke="#aebcd0" stroke-width="0.8"/></svg>
<div style="left:137.7px;top:86px;width:567.3000000000001px;height:13.2px;background:linear-gradient(#dbe5f1,#d3deec)"></div>
<div style="left:137.7px;top:98.4px;width:567.3000000000001px;height:0.6px;background:#c9d5e3"></div>
<div style="left:137.7px;top:99px;width:567.3000000000001px;height:0.9px;background:#e8eef6"></div>
<svg style="position:absolute;left:140.7px;top:89.5px" width="7" height="7" viewBox="0 0 7 7"><rect x="0.4" y="0.4" width="6.2" height="6.2" fill="#f6f9fd" stroke="#6a8ab8" stroke-width="0.7"/><path d="M3.5 1.5v3.5M2 3.6l1.5 1.6 1.5-1.6" fill="none" stroke="#2a5aa0" stroke-width="0.8"/></svg>
<div class="t" style="left:149.5px;top:93px;color:#2e3c52">Espandi tutto</div>
<svg style="position:absolute;left:183.5px;top:89.5px" width="7" height="7" viewBox="0 0 7 7"><rect x="0.4" y="0.4" width="6.2" height="6.2" fill="#c6dcf2" stroke="#5a80b8" stroke-width="0.7"/><path d="M3.5 5.5V2M2 3.4l1.5-1.6 1.5 1.6" fill="none" stroke="#2a5aa0" stroke-width="0.8"/></svg>
<div class="t" style="left:192.3px;top:93px;color:#2e3c52">Collassa tutto</div>
<svg style="position:absolute;left:230.5px;top:89.5px" width="7" height="7" viewBox="0 0 7 7"><path d="M1 3.5a2.5 2.5 0 0 1 4.5-1.5M6 3.5a2.5 2.5 0 0 1-4.5 1.5" fill="none" stroke="#8a949e" stroke-width="0.9"/><path d="M5.8 0.8v1.6H4.2M1.2 6.2V4.6h1.6" fill="none" stroke="#8a949e" stroke-width="0.7"/></svg>
<div class="t" style="left:239.3px;top:93px;color:#2e3c52">Aggiorna</div>
<svg style="position:absolute;left:267px;top:89.5px" width="7" height="7" viewBox="0 0 7 7"><rect x="1" y="0.5" width="5" height="6" fill="#e8eef6" stroke="#5a6a80" stroke-width="0.6"/><rect x="2" y="4.5" width="3" height="1.5" fill="#4a7ac0"/></svg>
<div class="t" style="left:275.5px;top:93px;color:#2e3c52">Identifica</div>
<svg style="position:absolute;left:299.5px;top:89.5px" width="7" height="7" viewBox="0 0 7 7"><rect x="0.5" y="0.5" width="6" height="6" fill="#e0eaf6" stroke="#4a78b8" stroke-width="0.6" stroke-dasharray="1 0.6"/><path d="M2 2h3M2 3.5h3M2 5h3" stroke="#4a78b8" stroke-width="0.6"/></svg>
<div class="t" style="left:308.3px;top:93px;color:#2e3c52">Seleziona nel disegno</div>
<svg style="position:absolute;left:362.5px;top:89px" width="30" height="8" viewBox="0 0 30 8"><rect x="0.5" y="0.8" width="8" height="6.4" fill="#e2efe8" stroke="#a8bcb4" stroke-width="0.5"/><path d="M0.5 3h8M0.5 5h8M3.2 0.8v6.4M5.8 0.8v6.4" stroke="#b8d0c4" stroke-width="0.4"/><rect x="16.5" y="0.8" width="7.5" height="6.4" fill="#fafcff" stroke="#5a7ab0" stroke-width="0.6"/><rect x="16.5" y="0.8" width="7.5" height="1.4" fill="#6a8ac0"/><rect x="19.5" y="3.8" width="3.5" height="2.6" fill="#4a6ab0"/></svg>
<div class="c" style="left:372.8px;top:93px;font-size:4px;color:#222">▾</div>
<div class="c" style="left:388.8px;top:93px;font-size:4px;color:#222">▾</div>
<svg style="position:absolute;left:394.5px;top:89px" width="8" height="8" viewBox="0 0 8 8"><rect x="2" y="0.5" width="4" height="2.5" fill="#fff" stroke="#666" stroke-width="0.5"/><rect x="0.5" y="2.8" width="7" height="3" rx="1" fill="#9a9a9a" stroke="#555" stroke-width="0.5"/><rect x="2" y="5" width="4" height="2.5" fill="#fff" stroke="#666" stroke-width="0.5"/></svg>
<div class="t" style="left:404px;top:93px;color:#2e3c52;font-size:4.8px">Stampa</div>
<div style="left:137.7px;top:99.8px;width:567.3000000000001px;height:22.5px;background:#d3dfee"></div>
<div style="left:155px;top:112px;width:0.6px;height:3.5px;background:#7a8898"></div>
<div style="left:155px;top:115px;width:18px;height:0.6px;background:#7a8898"></div>
<div style="left:142.3px;top:105px;width:27.7px;height:8.5px;background:#fafcfe;border:0.5px solid #c2cedc"></div>
<div class="t" style="left:144.5px;top:110.5px;color:#222;font-size:5.3px">Zona ▾</div>
<div style="left:172.6px;top:109.5px;width:38.4px;height:8.5px;background:#fafcfe;border:0.5px solid #c2cedc"></div>
<div class="t" style="left:175.5px;top:114.3px;color:#222;font-size:5.3px">Ambiente ▴</div>
<div style="left:137.7px;top:122.3px;width:558.7px;height:8px;background:linear-gradient(#f4f7fb,#e0e8f2);border-bottom:0.5px solid #c5d0dd"></div>
<div class="c" style="left:168px;top:126.3px;color:#333">Componente</div>
<div class="c" style="left:199px;top:126.5px;font-size:4px;color:#333">▾</div>
<div class="c" style="left:225.0px;top:126.3px;color:#333">Tipologia</div>
<div class="c" style="left:258.8px;top:126.3px;color:#333">Prog.</div>
<div class="c" style="left:287.3px;top:126.3px;color:#333">Corr.</div>
<div class="c" style="left:319.65px;top:126.3px;color:#333">Codice</div>
<div class="c" style="left:379.45000000000005px;top:126.3px;color:#333">Descrizione</div>
<div class="t" style="left:424.6px;top:126.3px;color:#333">Trasmit...</div>
<div class="t" style="left:455.6px;top:126.3px;color:#333">Orientamen...</div>
<div class="c" style="left:530.5px;top:126.3px;color:#333">Confinante con</div>
<div class="c" style="left:586.1px;top:126.3px;color:#333">Facciata</div>
<div class="c" style="left:626.6px;top:126.3px;color:#333">Superficie [m²]</div>
<div class="c" style="left:672.2px;top:126.3px;color:#333">Lunghezza [m]</div>
<div style="left:696.4px;top:122.3px;width:8.600000000000023px;height:8px;background:linear-gradient(#f4f7fb,#e0e8f2)"></div>
<div style="left:137.7px;top:130.3px;width:558.7px;height:11px;background:#fff;border-bottom:0.6px solid #c9d3df"></div>
<div style="left:207px;top:122.5px;width:0.6px;height:8px;background:#cdd6e2"></div>
<div style="left:207px;top:130.5px;width:0.6px;height:10px;background:#eceff4"></div>
<div style="left:246px;top:122.5px;width:0.6px;height:8px;background:#cdd6e2"></div>
<div style="left:246px;top:130.5px;width:0.6px;height:10px;background:#eceff4"></div>
<div style="left:274.6px;top:122.5px;width:0.6px;height:8px;background:#cdd6e2"></div>
<div style="left:274.6px;top:130.5px;width:0.6px;height:10px;background:#eceff4"></div>
<div style="left:303px;top:122.5px;width:0.6px;height:8px;background:#cdd6e2"></div>
<div style="left:303px;top:130.5px;width:0.6px;height:10px;background:#eceff4"></div>
<div style="left:339.3px;top:122.5px;width:0.6px;height:8px;background:#cdd6e2"></div>
<div style="left:339.3px;top:130.5px;width:0.6px;height:10px;background:#eceff4"></div>
<div style="left:422.6px;top:122.5px;width:0.6px;height:8px;background:#cdd6e2"></div>
<div style="left:422.6px;top:130.5px;width:0.6px;height:10px;background:#eceff4"></div>
<div style="left:453.6px;top:122.5px;width:0.6px;height:8px;background:#cdd6e2"></div>
<div style="left:453.6px;top:130.5px;width:0.6px;height:10px;background:#eceff4"></div>
<div style="left:494px;top:122.5px;width:0.6px;height:8px;background:#cdd6e2"></div>
<div style="left:494px;top:130.5px;width:0.6px;height:10px;background:#eceff4"></div>
<div style="left:570px;top:122.5px;width:0.6px;height:8px;background:#cdd6e2"></div>
<div style="left:570px;top:130.5px;width:0.6px;height:10px;background:#eceff4"></div>
<div style="left:605.2px;top:122.5px;width:0.6px;height:8px;background:#cdd6e2"></div>
<div style="left:605.2px;top:130.5px;width:0.6px;height:10px;background:#eceff4"></div>
<div style="left:651px;top:122.5px;width:0.6px;height:8px;background:#cdd6e2"></div>
<div style="left:651px;top:130.5px;width:0.6px;height:10px;background:#eceff4"></div>
<div style="left:137.7px;top:141.3px;width:558.7px;height:244px;background:#fff"></div>
<div class="c" style="left:143.7px;top:146.8px;font-size:4.5px;color:#666">▾</div>
<div class="t" style="left:149.8px;top:147.1px;font-weight:bold;color:#2a2a2a;font-size:5.05px">Zona: Piano Primo</div>
<div style="left:148px;top:150.7px;width:548.4px;height:8.2px;background:#d6e4f4;border:0.6px solid #9fb6d2"></div>
<div class="c" style="left:153px;top:155px;font-size:4.5px;color:#4a6aa0">▾</div>
<div class="t" style="left:159px;top:155.2px;font-weight:bold;color:#111;font-size:5.3px">Ambiente: Ambiente unico</div>
<div style="left:157px;top:158.9px;width:539.4px;height:8.588px;background:#ffffff;border-bottom:0.5px solid #e6ebf1"></div>
<div class="t" style="left:159.7px;top:163.59400000000002px;color:#1e1e1e">Cassonetto infisso</div>
<div style="left:207px;top:158.9px;width:0.5px;height:8.588px;background:#eef1f5"></div>
<div class="t" style="left:209.2px;top:163.59400000000002px;color:#1e1e1e">Cassonetto</div>
<div style="left:246px;top:158.9px;width:0.5px;height:8.588px;background:#eef1f5"></div>
<div class="t" style="left:248.2px;top:163.59400000000002px;color:#1e1e1e">CAS16</div>
<div style="left:274.6px;top:158.9px;width:0.5px;height:8.588px;background:#eef1f5"></div>
<div class="t" style="left:276.8px;top:163.59400000000002px;color:#1e1e1e">INF16</div>
<div style="left:303px;top:158.9px;width:0.5px;height:8.588px;background:#eef1f5"></div>
<div class="t" style="left:305.2px;top:163.59400000000002px;color:#1e1e1e">CA01</div>
<div style="left:339.3px;top:158.9px;width:0.5px;height:8.588px;background:#eef1f5"></div>
<div class="t" style="left:341.5px;top:163.59400000000002px;color:#1e1e1e">Cassonetto non isolato</div>
<div style="left:422.6px;top:158.9px;width:0.5px;height:8.588px;background:#eef1f5"></div>
<div class="r" style="left:452.1px;top:163.59400000000002px;color:#1e1e1e">6,000</div>
<div style="left:453.6px;top:158.9px;width:0.5px;height:8.588px;background:#eef1f5"></div>
<div class="t" style="left:455.8px;top:163.59400000000002px;color:#1e1e1e">Sud</div>
<div style="left:494px;top:158.9px;width:0.5px;height:8.588px;background:#eef1f5"></div>
<div class="t" style="left:496.2px;top:163.59400000000002px;color:#1e1e1e">Esterno</div>
<div style="left:570px;top:158.9px;width:0.5px;height:8.588px;background:#eef1f5"></div>
<div class="t" style="left:572.2px;top:163.59400000000002px;color:#1e1e1e">-</div>
<div style="left:605.2px;top:158.9px;width:0.5px;height:8.588px;background:#eef1f5"></div>
<div class="r" style="left:649.5px;top:163.59400000000002px;color:#1e1e1e">0,21</div>
<div style="left:651px;top:158.9px;width:0.5px;height:8.588px;background:#eef1f5"></div>
<div style="left:157px;top:167.488px;width:539.4px;height:8.588px;background:#eff3f9;border-bottom:0.5px solid #e6ebf1"></div>
<div class="t" style="left:159.7px;top:172.18200000000002px;color:#1e1e1e">Cassonetto infisso</div>
<div style="left:207px;top:167.488px;width:0.5px;height:8.588px;background:#eef1f5"></div>
<div class="t" style="left:209.2px;top:172.18200000000002px;color:#1e1e1e">Cassonetto</div>
<div style="left:246px;top:167.488px;width:0.5px;height:8.588px;background:#eef1f5"></div>
<div class="t" style="left:248.2px;top:172.18200000000002px;color:#1e1e1e">CAS17</div>
<div style="left:274.6px;top:167.488px;width:0.5px;height:8.588px;background:#eef1f5"></div>
<div class="t" style="left:276.8px;top:172.18200000000002px;color:#1e1e1e">INF17</div>
<div style="left:303px;top:167.488px;width:0.5px;height:8.588px;background:#eef1f5"></div>
<div class="t" style="left:305.2px;top:172.18200000000002px;color:#1e1e1e">CA01</div>
<div style="left:339.3px;top:167.488px;width:0.5px;height:8.588px;background:#eef1f5"></div>
<div class="t" style="left:341.5px;top:172.18200000000002px;color:#1e1e1e">Cassonetto non isolato</div>
<div style="left:422.6px;top:167.488px;width:0.5px;height:8.588px;background:#eef1f5"></div>
<div class="r" style="left:452.1px;top:172.18200000000002px;color:#1e1e1e">6,000</div>
<div style="left:453.6px;top:167.488px;width:0.5px;height:8.588px;background:#eef1f5"></div>
<div class="t" style="left:455.8px;top:172.18200000000002px;color:#1e1e1e">Sud</div>
<div style="left:494px;top:167.488px;width:0.5px;height:8.588px;background:#eef1f5"></div>
<div class="t" style="left:496.2px;top:172.18200000000002px;color:#1e1e1e">Esterno</div>
<div style="left:570px;top:167.488px;width:0.5px;height:8.588px;background:#eef1f5"></div>
<div class="t" style="left:572.2px;top:172.18200000000002px;color:#1e1e1e">-</div>
<div style="left:605.2px;top:167.488px;width:0.5px;height:8.588px;background:#eef1f5"></div>
<div class="r" style="left:649.5px;top:172.18200000000002px;color:#1e1e1e">0,42</div>
<div style="left:651px;top:167.488px;width:0.5px;height:8.588px;background:#eef1f5"></div>
<div style="left:157px;top:176.076px;width:539.4px;height:8.588px;background:#ffffff;border-bottom:0.5px solid #e6ebf1"></div>
<div class="t" style="left:159.7px;top:180.77px;color:#1e1e1e">Cassonetto infisso</div>
<div style="left:207px;top:176.076px;width:0.5px;height:8.588px;background:#eef1f5"></div>
<div class="t" style="left:209.2px;top:180.77px;color:#1e1e1e">Cassonetto</div>
<div style="left:246px;top:176.076px;width:0.5px;height:8.588px;background:#eef1f5"></div>
<div class="t" style="left:248.2px;top:180.77px;color:#1e1e1e">CAS18</div>
<div style="left:274.6px;top:176.076px;width:0.5px;height:8.588px;background:#eef1f5"></div>
<div class="t" style="left:276.8px;top:180.77px;color:#1e1e1e">INF18</div>
<div style="left:303px;top:176.076px;width:0.5px;height:8.588px;background:#eef1f5"></div>
<div class="t" style="left:305.2px;top:180.77px;color:#1e1e1e">CA01</div>
<div style="left:339.3px;top:176.076px;width:0.5px;height:8.588px;background:#eef1f5"></div>
<div class="t" style="left:341.5px;top:180.77px;color:#1e1e1e">Cassonetto non isolato</div>
<div style="left:422.6px;top:176.076px;width:0.5px;height:8.588px;background:#eef1f5"></div>
<div class="r" style="left:452.1px;top:180.77px;color:#1e1e1e">6,000</div>
<div style="left:453.6px;top:176.076px;width:0.5px;height:8.588px;background:#eef1f5"></div>
<div class="t" style="left:455.8px;top:180.77px;color:#1e1e1e">Sud</div>
<div style="left:494px;top:176.076px;width:0.5px;height:8.588px;background:#eef1f5"></div>
<div class="t" style="left:496.2px;top:180.77px;color:#1e1e1e">Esterno</div>
<div style="left:570px;top:176.076px;width:0.5px;height:8.588px;background:#eef1f5"></div>
<div class="t" style="left:572.2px;top:180.77px;color:#1e1e1e">-</div>
<div style="left:605.2px;top:176.076px;width:0.5px;height:8.588px;background:#eef1f5"></div>
<div class="r" style="left:649.5px;top:180.77px;color:#1e1e1e">0,42</div>
<div style="left:651px;top:176.076px;width:0.5px;height:8.588px;background:#eef1f5"></div>
<div style="left:157px;top:184.664px;width:539.4px;height:8.588px;background:#eff3f9;border-bottom:0.5px solid #e6ebf1"></div>
<div class="t" style="left:159.7px;top:189.358px;color:#1e1e1e">Cassonetto infisso</div>
<div style="left:207px;top:184.664px;width:0.5px;height:8.588px;background:#eef1f5"></div>
<div class="t" style="left:209.2px;top:189.358px;color:#1e1e1e">Cassonetto</div>
<div style="left:246px;top:184.664px;width:0.5px;height:8.588px;background:#eef1f5"></div>
<div class="t" style="left:248.2px;top:189.358px;color:#1e1e1e">CAS12</div>
<div style="left:274.6px;top:184.664px;width:0.5px;height:8.588px;background:#eef1f5"></div>
<div class="t" style="left:276.8px;top:189.358px;color:#1e1e1e">INF12</div>
<div style="left:303px;top:184.664px;width:0.5px;height:8.588px;background:#eef1f5"></div>
<div class="t" style="left:305.2px;top:189.358px;color:#1e1e1e">CA01</div>
<div style="left:339.3px;top:184.664px;width:0.5px;height:8.588px;background:#eef1f5"></div>
<div class="t" style="left:341.5px;top:189.358px;color:#1e1e1e">Cassonetto non isolato</div>
<div style="left:422.6px;top:184.664px;width:0.5px;height:8.588px;background:#eef1f5"></div>
<div class="r" style="left:452.1px;top:189.358px;color:#1e1e1e">6,000</div>
<div style="left:453.6px;top:184.664px;width:0.5px;height:8.588px;background:#eef1f5"></div>
<div class="t" style="left:455.8px;top:189.358px;color:#1e1e1e">Nord</div>
<div style="left:494px;top:184.664px;width:0.5px;height:8.588px;background:#eef1f5"></div>
<div class="t" style="left:496.2px;top:189.358px;color:#1e1e1e">Esterno</div>
<div style="left:570px;top:184.664px;width:0.5px;height:8.588px;background:#eef1f5"></div>
<div class="t" style="left:572.2px;top:189.358px;color:#1e1e1e">-</div>
<div style="left:605.2px;top:184.664px;width:0.5px;height:8.588px;background:#eef1f5"></div>
<div class="r" style="left:649.5px;top:189.358px;color:#1e1e1e">0,21</div>
<div style="left:651px;top:184.664px;width:0.5px;height:8.588px;background:#eef1f5"></div>
<div style="left:157px;top:193.252px;width:539.4px;height:8.588px;background:#ffffff;border-bottom:0.5px solid #e6ebf1"></div>
<div class="t" style="left:159.7px;top:197.94600000000003px;color:#1e1e1e">Cassonetto infisso</div>
<div style="left:207px;top:193.252px;width:0.5px;height:8.588px;background:#eef1f5"></div>
<div class="t" style="left:209.2px;top:197.94600000000003px;color:#1e1e1e">Cassonetto</div>
<div style="left:246px;top:193.252px;width:0.5px;height:8.588px;background:#eef1f5"></div>
<div class="t" style="left:248.2px;top:197.94600000000003px;color:#1e1e1e">CAS14</div>
<div style="left:274.6px;top:193.252px;width:0.5px;height:8.588px;background:#eef1f5"></div>
<div class="t" style="left:276.8px;top:197.94600000000003px;color:#1e1e1e">INF14</div>
<div style="left:303px;top:193.252px;width:0.5px;height:8.588px;background:#eef1f5"></div>
<div class="t" style="left:305.2px;top:197.94600000000003px;color:#1e1e1e">CA01</div>
<div style="left:339.3px;top:193.252px;width:0.5px;height:8.588px;background:#eef1f5"></div>
<div class="t" style="left:341.5px;top:197.94600000000003px;color:#1e1e1e">Cassonetto non isolato</div>
<div style="left:422.6px;top:193.252px;width:0.5px;height:8.588px;background:#eef1f5"></div>
<div class="r" style="left:452.1px;top:197.94600000000003px;color:#1e1e1e">6,000</div>
<div style="left:453.6px;top:193.252px;width:0.5px;height:8.588px;background:#eef1f5"></div>
<div class="t" style="left:455.8px;top:197.94600000000003px;color:#1e1e1e">Nord</div>
<div style="left:494px;top:193.252px;width:0.5px;height:8.588px;background:#eef1f5"></div>
<div class="t" style="left:496.2px;top:197.94600000000003px;color:#1e1e1e">Esterno</div>
<div style="left:570px;top:193.252px;width:0.5px;height:8.588px;background:#eef1f5"></div>
<div class="t" style="left:572.2px;top:197.94600000000003px;color:#1e1e1e">-</div>
<div style="left:605.2px;top:193.252px;width:0.5px;height:8.588px;background:#eef1f5"></div>
<div class="r" style="left:649.5px;top:197.94600000000003px;color:#1e1e1e">0,42</div>
<div style="left:651px;top:193.252px;width:0.5px;height:8.588px;background:#eef1f5"></div>
<div style="left:157px;top:201.84px;width:539.4px;height:8.588px;background:#eff3f9;border-bottom:0.5px solid #e6ebf1"></div>
<div class="t" style="left:159.7px;top:206.53400000000002px;color:#1e1e1e">Cassonetto infisso</div>
<div style="left:207px;top:201.84px;width:0.5px;height:8.588px;background:#eef1f5"></div>
<div class="t" style="left:209.2px;top:206.53400000000002px;color:#1e1e1e">Cassonetto</div>
<div style="left:246px;top:201.84px;width:0.5px;height:8.588px;background:#eef1f5"></div>
<div class="t" style="left:248.2px;top:206.53400000000002px;color:#1e1e1e">CAS13</div>
<div style="left:274.6px;top:201.84px;width:0.5px;height:8.588px;background:#eef1f5"></div>
<div class="t" style="left:276.8px;top:206.53400000000002px;color:#1e1e1e">INF13</div>
<div style="left:303px;top:201.84px;width:0.5px;height:8.588px;background:#eef1f5"></div>
<div class="t" style="left:305.2px;top:206.53400000000002px;color:#1e1e1e">CA01</div>
<div style="left:339.3px;top:201.84px;width:0.5px;height:8.588px;background:#eef1f5"></div>
<div class="t" style="left:341.5px;top:206.53400000000002px;color:#1e1e1e">Cassonetto non isolato</div>
<div style="left:422.6px;top:201.84px;width:0.5px;height:8.588px;background:#eef1f5"></div>
<div class="r" style="left:452.1px;top:206.53400000000002px;color:#1e1e1e">6,000</div>
<div style="left:453.6px;top:201.84px;width:0.5px;height:8.588px;background:#eef1f5"></div>
<div class="t" style="left:455.8px;top:206.53400000000002px;color:#1e1e1e">Nord</div>
<div style="left:494px;top:201.84px;width:0.5px;height:8.588px;background:#eef1f5"></div>
<div class="t" style="left:496.2px;top:206.53400000000002px;color:#1e1e1e">Esterno</div>
<div style="left:570px;top:201.84px;width:0.5px;height:8.588px;background:#eef1f5"></div>
<div class="t" style="left:572.2px;top:206.53400000000002px;color:#1e1e1e">-</div>
<div style="left:605.2px;top:201.84px;width:0.5px;height:8.588px;background:#eef1f5"></div>
<div class="r" style="left:649.5px;top:206.53400000000002px;color:#1e1e1e">0,42</div>
<div style="left:651px;top:201.84px;width:0.5px;height:8.588px;background:#eef1f5"></div>
<div style="left:157px;top:210.428px;width:539.4px;height:8.588px;background:#ffffff;border-bottom:0.5px solid #e6ebf1"></div>
<div class="t" style="left:159.7px;top:215.122px;color:#1e1e1e">Cassonetto infisso</div>
<div style="left:207px;top:210.428px;width:0.5px;height:8.588px;background:#eef1f5"></div>
<div class="t" style="left:209.2px;top:215.122px;color:#1e1e1e">Cassonetto</div>
<div style="left:246px;top:210.428px;width:0.5px;height:8.588px;background:#eef1f5"></div>
<div class="t" style="left:248.2px;top:215.122px;color:#1e1e1e">CAS11</div>
<div style="left:274.6px;top:210.428px;width:0.5px;height:8.588px;background:#eef1f5"></div>
<div class="t" style="left:276.8px;top:215.122px;color:#1e1e1e">INF11</div>
<div style="left:303px;top:210.428px;width:0.5px;height:8.588px;background:#eef1f5"></div>
<div class="t" style="left:305.2px;top:215.122px;color:#1e1e1e">CA01</div>
<div style="left:339.3px;top:210.428px;width:0.5px;height:8.588px;background:#eef1f5"></div>
<div class="t" style="left:341.5px;top:215.122px;color:#1e1e1e">Cassonetto non isolato</div>
<div style="left:422.6px;top:210.428px;width:0.5px;height:8.588px;background:#eef1f5"></div>
<div class="r" style="left:452.1px;top:215.122px;color:#1e1e1e">6,000</div>
<div style="left:453.6px;top:210.428px;width:0.5px;height:8.588px;background:#eef1f5"></div>
<div class="t" style="left:455.8px;top:215.122px;color:#1e1e1e">Nord</div>
<div style="left:494px;top:210.428px;width:0.5px;height:8.588px;background:#eef1f5"></div>
<div class="t" style="left:496.2px;top:215.122px;color:#1e1e1e">Esterno</div>
<div style="left:570px;top:210.428px;width:0.5px;height:8.588px;background:#eef1f5"></div>
<div class="t" style="left:572.2px;top:215.122px;color:#1e1e1e">-</div>
<div style="left:605.2px;top:210.428px;width:0.5px;height:8.588px;background:#eef1f5"></div>
<div class="r" style="left:649.5px;top:215.122px;color:#1e1e1e">0,21</div>
<div style="left:651px;top:210.428px;width:0.5px;height:8.588px;background:#eef1f5"></div>
<div style="left:157px;top:219.016px;width:539.4px;height:8.588px;background:#eff3f9;border-bottom:0.5px solid #e6ebf1"></div>
<div class="t" style="left:159.7px;top:223.71px;color:#1e1e1e">Cassonetto infisso</div>
<div style="left:207px;top:219.016px;width:0.5px;height:8.588px;background:#eef1f5"></div>
<div class="t" style="left:209.2px;top:223.71px;color:#1e1e1e">Cassonetto</div>
<div style="left:246px;top:219.016px;width:0.5px;height:8.588px;background:#eef1f5"></div>
<div class="t" style="left:248.2px;top:223.71px;color:#1e1e1e">CAS10</div>
<div style="left:274.6px;top:219.016px;width:0.5px;height:8.588px;background:#eef1f5"></div>
<div class="t" style="left:276.8px;top:223.71px;color:#1e1e1e">INF10</div>
<div style="left:303px;top:219.016px;width:0.5px;height:8.588px;background:#eef1f5"></div>
<div class="t" style="left:305.2px;top:223.71px;color:#1e1e1e">CA01</div>
<div style="left:339.3px;top:219.016px;width:0.5px;height:8.588px;background:#eef1f5"></div>
<div class="t" style="left:341.5px;top:223.71px;color:#1e1e1e">Cassonetto non isolato</div>
<div style="left:422.6px;top:219.016px;width:0.5px;height:8.588px;background:#eef1f5"></div>
<div class="r" style="left:452.1px;top:223.71px;color:#1e1e1e">6,000</div>
<div style="left:453.6px;top:219.016px;width:0.5px;height:8.588px;background:#eef1f5"></div>
<div class="t" style="left:455.8px;top:223.71px;color:#1e1e1e">Ovest</div>
<div style="left:494px;top:219.016px;width:0.5px;height:8.588px;background:#eef1f5"></div>
<div class="t" style="left:496.2px;top:223.71px;color:#1e1e1e">Esterno</div>
<div style="left:570px;top:219.016px;width:0.5px;height:8.588px;background:#eef1f5"></div>
<div class="t" style="left:572.2px;top:223.71px;color:#1e1e1e">-</div>
<div style="left:605.2px;top:219.016px;width:0.5px;height:8.588px;background:#eef1f5"></div>
<div class="r" style="left:649.5px;top:223.71px;color:#1e1e1e">0,42</div>
<div style="left:651px;top:219.016px;width:0.5px;height:8.588px;background:#eef1f5"></div>
<div style="left:157px;top:227.60399999999998px;width:539.4px;height:8.588px;background:#ffffff;border-bottom:0.5px solid #e6ebf1"></div>
<div class="t" style="left:159.7px;top:232.298px;color:#1e1e1e">Cassonetto infisso</div>
<div style="left:207px;top:227.60399999999998px;width:0.5px;height:8.588px;background:#eef1f5"></div>
<div class="t" style="left:209.2px;top:232.298px;color:#1e1e1e">Cassonetto</div>
<div style="left:246px;top:227.60399999999998px;width:0.5px;height:8.588px;background:#eef1f5"></div>
<div class="t" style="left:248.2px;top:232.298px;color:#1e1e1e">CAS15</div>
<div style="left:274.6px;top:227.60399999999998px;width:0.5px;height:8.588px;background:#eef1f5"></div>
<div class="t" style="left:276.8px;top:232.298px;color:#1e1e1e">INF15</div>
<div style="left:303px;top:227.60399999999998px;width:0.5px;height:8.588px;background:#eef1f5"></div>
<div class="t" style="left:305.2px;top:232.298px;color:#1e1e1e">CA01</div>
<div style="left:339.3px;top:227.60399999999998px;width:0.5px;height:8.588px;background:#eef1f5"></div>
<div class="t" style="left:341.5px;top:232.298px;color:#1e1e1e">Cassonetto non isolato</div>
<div style="left:422.6px;top:227.60399999999998px;width:0.5px;height:8.588px;background:#eef1f5"></div>
<div class="r" style="left:452.1px;top:232.298px;color:#1e1e1e">6,000</div>
<div style="left:453.6px;top:227.60399999999998px;width:0.5px;height:8.588px;background:#eef1f5"></div>
<div class="t" style="left:455.8px;top:232.298px;color:#1e1e1e">Est</div>
<div style="left:494px;top:227.60399999999998px;width:0.5px;height:8.588px;background:#eef1f5"></div>
<div class="t" style="left:496.2px;top:232.298px;color:#1e1e1e">Esterno</div>
<div style="left:570px;top:227.60399999999998px;width:0.5px;height:8.588px;background:#eef1f5"></div>
<div class="t" style="left:572.2px;top:232.298px;color:#1e1e1e">-</div>
<div style="left:605.2px;top:227.60399999999998px;width:0.5px;height:8.588px;background:#eef1f5"></div>
<div class="r" style="left:649.5px;top:232.298px;color:#1e1e1e">0,42</div>
<div style="left:651px;top:227.60399999999998px;width:0.5px;height:8.588px;background:#eef1f5"></div>
<div style="left:157px;top:236.192px;width:539.4px;height:8.588px;background:#eff3f9;border-bottom:0.5px solid #e6ebf1"></div>
<div class="t" style="left:159.7px;top:240.88600000000002px;color:#1e1e1e">Copertura</div>
<div style="left:207px;top:236.192px;width:0.5px;height:8.588px;background:#eef1f5"></div>
<div class="t" style="left:209.2px;top:240.88600000000002px;color:#1e1e1e">Copertura</div>
<div style="left:246px;top:236.192px;width:0.5px;height:8.588px;background:#eef1f5"></div>
<div class="t" style="left:248.2px;top:240.88600000000002px;color:#1e1e1e">SOL1</div>
<div style="left:274.6px;top:236.192px;width:0.5px;height:8.588px;background:#eef1f5"></div>
<div style="left:303px;top:236.192px;width:0.5px;height:8.588px;background:#eef1f5"></div>
<div class="t" style="left:305.2px;top:240.88600000000002px;color:#1e1e1e">SOLE4A</div>
<div style="left:339.3px;top:236.192px;width:0.5px;height:8.588px;background:#eef1f5"></div>
<div class="t" style="left:341.5px;top:240.88600000000002px;color:#1e1e1e">4A - Copertura su esterno 30 cm</div>
<div style="left:422.6px;top:236.192px;width:0.5px;height:8.588px;background:#eef1f5"></div>
<div class="r" style="left:452.1px;top:240.88600000000002px;color:#1e1e1e">2,839</div>
<div style="left:453.6px;top:236.192px;width:0.5px;height:8.588px;background:#eef1f5"></div>
<div class="t" style="left:455.8px;top:240.88600000000002px;color:#1e1e1e">Nord</div>
<div style="left:494px;top:236.192px;width:0.5px;height:8.588px;background:#eef1f5"></div>
<div class="t" style="left:496.2px;top:240.88600000000002px;color:#1e1e1e">Esterno</div>
<div style="left:570px;top:236.192px;width:0.5px;height:8.588px;background:#eef1f5"></div>
<div class="t" style="left:572.2px;top:240.88600000000002px;color:#1e1e1e">-</div>
<div style="left:605.2px;top:236.192px;width:0.5px;height:8.588px;background:#eef1f5"></div>
<div class="r" style="left:649.5px;top:240.88600000000002px;color:#1e1e1e">121,92</div>
<div style="left:651px;top:236.192px;width:0.5px;height:8.588px;background:#eef1f5"></div>
<div style="left:157px;top:244.78px;width:539.4px;height:8.588px;background:#ffffff;border-bottom:0.5px solid #e6ebf1"></div>
<div class="t" style="left:159.7px;top:249.47400000000002px;color:#1e1e1e">Infisso singolo</div>
<div style="left:207px;top:244.78px;width:0.5px;height:8.588px;background:#eef1f5"></div>
<div class="t" style="left:209.2px;top:249.47400000000002px;color:#1e1e1e">Finestra</div>
<div style="left:246px;top:244.78px;width:0.5px;height:8.588px;background:#eef1f5"></div>
<div class="t" style="left:248.2px;top:249.47400000000002px;color:#1e1e1e">INF16</div>
<div style="left:274.6px;top:244.78px;width:0.5px;height:8.588px;background:#eef1f5"></div>
<div class="t" style="left:276.8px;top:249.47400000000002px;color:#1e1e1e">P16</div>
<div style="left:303px;top:244.78px;width:0.5px;height:8.588px;background:#eef1f5"></div>
<div class="t" style="left:305.2px;top:249.47400000000002px;color:#1e1e1e">FE08</div>
<div style="left:339.3px;top:244.78px;width:0.5px;height:8.588px;background:#eef1f5"></div>
<div class="t" style="left:341.5px;top:249.47400000000002px;color:#1e1e1e">Infisso con telaio in metallo con ta...</div>
<div style="left:422.6px;top:244.78px;width:0.5px;height:8.588px;background:#eef1f5"></div>
<div class="r" style="left:452.1px;top:249.47400000000002px;color:#1e1e1e">3,1</div>
<div style="left:453.6px;top:244.78px;width:0.5px;height:8.588px;background:#eef1f5"></div>
<div class="t" style="left:455.8px;top:249.47400000000002px;color:#1e1e1e">Sud</div>
<div style="left:494px;top:244.78px;width:0.5px;height:8.588px;background:#eef1f5"></div>
<div class="t" style="left:496.2px;top:249.47400000000002px;color:#1e1e1e">Esterno</div>
<div style="left:570px;top:244.78px;width:0.5px;height:8.588px;background:#eef1f5"></div>
<div class="t" style="left:572.2px;top:249.47400000000002px;color:#1e1e1e">-</div>
<div style="left:605.2px;top:244.78px;width:0.5px;height:8.588px;background:#eef1f5"></div>
<div class="r" style="left:649.5px;top:249.47400000000002px;color:#1e1e1e">1,05</div>
<div style="left:651px;top:244.78px;width:0.5px;height:8.588px;background:#eef1f5"></div>
<div style="left:157px;top:253.368px;width:539.4px;height:8.588px;background:#eff3f9;border-bottom:0.5px solid #e6ebf1"></div>
<div class="t" style="left:159.7px;top:258.06199999999995px;color:#1e1e1e">Infisso singolo</div>
<div style="left:207px;top:253.368px;width:0.5px;height:8.588px;background:#eef1f5"></div>
<div class="t" style="left:209.2px;top:258.06199999999995px;color:#1e1e1e">Balcone</div>
<div style="left:246px;top:253.368px;width:0.5px;height:8.588px;background:#eef1f5"></div>
<div class="t" style="left:248.2px;top:258.06199999999995px;color:#1e1e1e">INF17</div>
<div style="left:274.6px;top:253.368px;width:0.5px;height:8.588px;background:#eef1f5"></div>
<div class="t" style="left:276.8px;top:258.06199999999995px;color:#1e1e1e">P18</div>
<div style="left:303px;top:253.368px;width:0.5px;height:8.588px;background:#eef1f5"></div>
<div class="t" style="left:305.2px;top:258.06199999999995px;color:#1e1e1e">FE08</div>
<div style="left:339.3px;top:253.368px;width:0.5px;height:8.588px;background:#eef1f5"></div>
<div class="t" style="left:341.5px;top:258.06199999999995px;color:#1e1e1e">Infisso con telaio in metallo con ta...</div>
<div style="left:422.6px;top:253.368px;width:0.5px;height:8.588px;background:#eef1f5"></div>
<div class="r" style="left:452.1px;top:258.06199999999995px;color:#1e1e1e">3,1</div>
<div style="left:453.6px;top:253.368px;width:0.5px;height:8.588px;background:#eef1f5"></div>
<div class="t" style="left:455.8px;top:258.06199999999995px;color:#1e1e1e">Sud</div>
<div style="left:494px;top:253.368px;width:0.5px;height:8.588px;background:#eef1f5"></div>
<div class="t" style="left:496.2px;top:258.06199999999995px;color:#1e1e1e">Esterno</div>
<div style="left:570px;top:253.368px;width:0.5px;height:8.588px;background:#eef1f5"></div>
<div class="t" style="left:572.2px;top:258.06199999999995px;color:#1e1e1e">-</div>
<div style="left:605.2px;top:253.368px;width:0.5px;height:8.588px;background:#eef1f5"></div>
<div class="r" style="left:649.5px;top:258.06199999999995px;color:#1e1e1e">3,50</div>
<div style="left:651px;top:253.368px;width:0.5px;height:8.588px;background:#eef1f5"></div>
<div style="left:157px;top:261.956px;width:539.4px;height:8.588px;background:#ffffff;border-bottom:0.5px solid #e6ebf1"></div>
<div class="t" style="left:159.7px;top:266.65px;color:#1e1e1e">Infisso singolo</div>
<div style="left:207px;top:261.956px;width:0.5px;height:8.588px;background:#eef1f5"></div>
<div class="t" style="left:209.2px;top:266.65px;color:#1e1e1e">Balcone</div>
<div style="left:246px;top:261.956px;width:0.5px;height:8.588px;background:#eef1f5"></div>
<div class="t" style="left:248.2px;top:266.65px;color:#1e1e1e">INF18</div>
<div style="left:274.6px;top:261.956px;width:0.5px;height:8.588px;background:#eef1f5"></div>
<div class="t" style="left:276.8px;top:266.65px;color:#1e1e1e">P20</div>
<div style="left:303px;top:261.956px;width:0.5px;height:8.588px;background:#eef1f5"></div>
<div class="t" style="left:305.2px;top:266.65px;color:#1e1e1e">FE08</div>
<div style="left:339.3px;top:261.956px;width:0.5px;height:8.588px;background:#eef1f5"></div>
<div class="t" style="left:341.5px;top:266.65px;color:#1e1e1e">Infisso con telaio in metallo con ta...</div>
<div style="left:422.6px;top:261.956px;width:0.5px;height:8.588px;background:#eef1f5"></div>
<div class="r" style="left:452.1px;top:266.65px;color:#1e1e1e">3,1</div>
<div style="left:453.6px;top:261.956px;width:0.5px;height:8.588px;background:#eef1f5"></div>
<div class="t" style="left:455.8px;top:266.65px;color:#1e1e1e">Sud</div>
<div style="left:494px;top:261.956px;width:0.5px;height:8.588px;background:#eef1f5"></div>
<div class="t" style="left:496.2px;top:266.65px;color:#1e1e1e">Esterno</div>
<div style="left:570px;top:261.956px;width:0.5px;height:8.588px;background:#eef1f5"></div>
<div class="t" style="left:572.2px;top:266.65px;color:#1e1e1e">-</div>
<div style="left:605.2px;top:261.956px;width:0.5px;height:8.588px;background:#eef1f5"></div>
<div class="r" style="left:649.5px;top:266.65px;color:#1e1e1e">3,48</div>
<div style="left:651px;top:261.956px;width:0.5px;height:8.588px;background:#eef1f5"></div>
<div style="left:157px;top:270.544px;width:539.4px;height:8.588px;background:#eff3f9;border-bottom:0.5px solid #e6ebf1"></div>
<div class="t" style="left:159.7px;top:275.23799999999994px;color:#1e1e1e">Infisso singolo</div>
<div style="left:207px;top:270.544px;width:0.5px;height:8.588px;background:#eef1f5"></div>
<div class="t" style="left:209.2px;top:275.23799999999994px;color:#1e1e1e">Finestra</div>
<div style="left:246px;top:270.544px;width:0.5px;height:8.588px;background:#eef1f5"></div>
<div class="t" style="left:248.2px;top:275.23799999999994px;color:#1e1e1e">INF12</div>
<div style="left:274.6px;top:270.544px;width:0.5px;height:8.588px;background:#eef1f5"></div>
<div class="t" style="left:276.8px;top:275.23799999999994px;color:#1e1e1e">P12</div>
<div style="left:303px;top:270.544px;width:0.5px;height:8.588px;background:#eef1f5"></div>
<div class="t" style="left:305.2px;top:275.23799999999994px;color:#1e1e1e">FE08</div>
<div style="left:339.3px;top:270.544px;width:0.5px;height:8.588px;background:#eef1f5"></div>
<div class="t" style="left:341.5px;top:275.23799999999994px;color:#1e1e1e">Infisso con telaio in metallo con ta...</div>
<div style="left:422.6px;top:270.544px;width:0.5px;height:8.588px;background:#eef1f5"></div>
<div class="r" style="left:452.1px;top:275.23799999999994px;color:#1e1e1e">3,1</div>
<div style="left:453.6px;top:270.544px;width:0.5px;height:8.588px;background:#eef1f5"></div>
<div class="t" style="left:455.8px;top:275.23799999999994px;color:#1e1e1e">Nord</div>
<div style="left:494px;top:270.544px;width:0.5px;height:8.588px;background:#eef1f5"></div>
<div class="t" style="left:496.2px;top:275.23799999999994px;color:#1e1e1e">Esterno</div>
<div style="left:570px;top:270.544px;width:0.5px;height:8.588px;background:#eef1f5"></div>
<div class="t" style="left:572.2px;top:275.23799999999994px;color:#1e1e1e">-</div>
<div style="left:605.2px;top:270.544px;width:0.5px;height:8.588px;background:#eef1f5"></div>
<div class="r" style="left:649.5px;top:275.23799999999994px;color:#1e1e1e">1,05</div>
<div style="left:651px;top:270.544px;width:0.5px;height:8.588px;background:#eef1f5"></div>
<div style="left:157px;top:279.132px;width:539.4px;height:8.588px;background:#ffffff;border-bottom:0.5px solid #e6ebf1"></div>
<div class="t" style="left:159.7px;top:283.82599999999996px;color:#1e1e1e">Infisso singolo</div>
<div style="left:207px;top:279.132px;width:0.5px;height:8.588px;background:#eef1f5"></div>
<div class="t" style="left:209.2px;top:283.82599999999996px;color:#1e1e1e">Finestra</div>
<div style="left:246px;top:279.132px;width:0.5px;height:8.588px;background:#eef1f5"></div>
<div class="t" style="left:248.2px;top:283.82599999999996px;color:#1e1e1e">INF14</div>
<div style="left:274.6px;top:279.132px;width:0.5px;height:8.588px;background:#eef1f5"></div>
<div class="t" style="left:276.8px;top:283.82599999999996px;color:#1e1e1e">P12</div>
<div style="left:303px;top:279.132px;width:0.5px;height:8.588px;background:#eef1f5"></div>
<div class="t" style="left:305.2px;top:283.82599999999996px;color:#1e1e1e">FE08</div>
<div style="left:339.3px;top:279.132px;width:0.5px;height:8.588px;background:#eef1f5"></div>
<div class="t" style="left:341.5px;top:283.82599999999996px;color:#1e1e1e">Infisso con telaio in metallo con ta...</div>
<div style="left:422.6px;top:279.132px;width:0.5px;height:8.588px;background:#eef1f5"></div>
<div class="r" style="left:452.1px;top:283.82599999999996px;color:#1e1e1e">3,1</div>
<div style="left:453.6px;top:279.132px;width:0.5px;height:8.588px;background:#eef1f5"></div>
<div class="t" style="left:455.8px;top:283.82599999999996px;color:#1e1e1e">Nord</div>
<div style="left:494px;top:279.132px;width:0.5px;height:8.588px;background:#eef1f5"></div>
<div class="t" style="left:496.2px;top:283.82599999999996px;color:#1e1e1e">Esterno</div>
<div style="left:570px;top:279.132px;width:0.5px;height:8.588px;background:#eef1f5"></div>
<div class="t" style="left:572.2px;top:283.82599999999996px;color:#1e1e1e">-</div>
<div style="left:605.2px;top:279.132px;width:0.5px;height:8.588px;background:#eef1f5"></div>
<div class="r" style="left:649.5px;top:283.82599999999996px;color:#1e1e1e">2,10</div>
<div style="left:651px;top:279.132px;width:0.5px;height:8.588px;background:#eef1f5"></div>
<div style="left:157px;top:287.72px;width:539.4px;height:8.588px;background:#eff3f9;border-bottom:0.5px solid #e6ebf1"></div>
<div class="t" style="left:159.7px;top:292.414px;color:#1e1e1e">Infisso singolo</div>
<div style="left:207px;top:287.72px;width:0.5px;height:8.588px;background:#eef1f5"></div>
<div class="t" style="left:209.2px;top:292.414px;color:#1e1e1e">Finestra</div>
<div style="left:246px;top:287.72px;width:0.5px;height:8.588px;background:#eef1f5"></div>
<div class="t" style="left:248.2px;top:292.414px;color:#1e1e1e">INF13</div>
<div style="left:274.6px;top:287.72px;width:0.5px;height:8.588px;background:#eef1f5"></div>
<div class="t" style="left:276.8px;top:292.414px;color:#1e1e1e">P12</div>
<div style="left:303px;top:287.72px;width:0.5px;height:8.588px;background:#eef1f5"></div>
<div class="t" style="left:305.2px;top:292.414px;color:#1e1e1e">FE08</div>
<div style="left:339.3px;top:287.72px;width:0.5px;height:8.588px;background:#eef1f5"></div>
<div class="t" style="left:341.5px;top:292.414px;color:#1e1e1e">Infisso con telaio in metallo con ta...</div>
<div style="left:422.6px;top:287.72px;width:0.5px;height:8.588px;background:#eef1f5"></div>
<div class="r" style="left:452.1px;top:292.414px;color:#1e1e1e">3,1</div>
<div style="left:453.6px;top:287.72px;width:0.5px;height:8.588px;background:#eef1f5"></div>
<div class="t" style="left:455.8px;top:292.414px;color:#1e1e1e">Nord</div>
<div style="left:494px;top:287.72px;width:0.5px;height:8.588px;background:#eef1f5"></div>
<div class="t" style="left:496.2px;top:292.414px;color:#1e1e1e">Esterno</div>
<div style="left:570px;top:287.72px;width:0.5px;height:8.588px;background:#eef1f5"></div>
<div class="t" style="left:572.2px;top:292.414px;color:#1e1e1e">-</div>
<div style="left:605.2px;top:287.72px;width:0.5px;height:8.588px;background:#eef1f5"></div>
<div class="r" style="left:649.5px;top:292.414px;color:#1e1e1e">2,10</div>
<div style="left:651px;top:287.72px;width:0.5px;height:8.588px;background:#eef1f5"></div>
<div style="left:157px;top:296.308px;width:539.4px;height:8.588px;background:#ffffff;border-bottom:0.5px solid #e6ebf1"></div>
<div class="t" style="left:159.7px;top:301.00199999999995px;color:#1e1e1e">Infisso singolo</div>
<div style="left:207px;top:296.308px;width:0.5px;height:8.588px;background:#eef1f5"></div>
<div class="t" style="left:209.2px;top:301.00199999999995px;color:#1e1e1e">Finestra</div>
<div style="left:246px;top:296.308px;width:0.5px;height:8.588px;background:#eef1f5"></div>
<div class="t" style="left:248.2px;top:301.00199999999995px;color:#1e1e1e">INF11</div>
<div style="left:274.6px;top:296.308px;width:0.5px;height:8.588px;background:#eef1f5"></div>
<div class="t" style="left:276.8px;top:301.00199999999995px;color:#1e1e1e">P12</div>
<div style="left:303px;top:296.308px;width:0.5px;height:8.588px;background:#eef1f5"></div>
<div class="t" style="left:305.2px;top:301.00199999999995px;color:#1e1e1e">FE08</div>
<div style="left:339.3px;top:296.308px;width:0.5px;height:8.588px;background:#eef1f5"></div>
<div class="t" style="left:341.5px;top:301.00199999999995px;color:#1e1e1e">Infisso con telaio in metallo con ta...</div>
<div style="left:422.6px;top:296.308px;width:0.5px;height:8.588px;background:#eef1f5"></div>
<div class="r" style="left:452.1px;top:301.00199999999995px;color:#1e1e1e">3,1</div>
<div style="left:453.6px;top:296.308px;width:0.5px;height:8.588px;background:#eef1f5"></div>
<div class="t" style="left:455.8px;top:301.00199999999995px;color:#1e1e1e">Nord</div>
<div style="left:494px;top:296.308px;width:0.5px;height:8.588px;background:#eef1f5"></div>
<div class="t" style="left:496.2px;top:301.00199999999995px;color:#1e1e1e">Esterno</div>
<div style="left:570px;top:296.308px;width:0.5px;height:8.588px;background:#eef1f5"></div>
<div class="t" style="left:572.2px;top:301.00199999999995px;color:#1e1e1e">-</div>
<div style="left:605.2px;top:296.308px;width:0.5px;height:8.588px;background:#eef1f5"></div>
<div class="r" style="left:649.5px;top:301.00199999999995px;color:#1e1e1e">1,05</div>
<div style="left:651px;top:296.308px;width:0.5px;height:8.588px;background:#eef1f5"></div>
<div style="left:157px;top:304.89599999999996px;width:539.4px;height:8.588px;background:#eff3f9;border-bottom:0.5px solid #e6ebf1"></div>
<div class="t" style="left:159.7px;top:309.5899999999999px;color:#1e1e1e">Infisso singolo</div>
<div style="left:207px;top:304.89599999999996px;width:0.5px;height:8.588px;background:#eef1f5"></div>
<div class="t" style="left:209.2px;top:309.5899999999999px;color:#1e1e1e">Finestra</div>
<div style="left:246px;top:304.89599999999996px;width:0.5px;height:8.588px;background:#eef1f5"></div>
<div class="t" style="left:248.2px;top:309.5899999999999px;color:#1e1e1e">INF10</div>
<div style="left:274.6px;top:304.89599999999996px;width:0.5px;height:8.588px;background:#eef1f5"></div>
<div class="t" style="left:276.8px;top:309.5899999999999px;color:#1e1e1e">P11</div>
<div style="left:303px;top:304.89599999999996px;width:0.5px;height:8.588px;background:#eef1f5"></div>
<div class="t" style="left:305.2px;top:309.5899999999999px;color:#1e1e1e">FE08</div>
<div style="left:339.3px;top:304.89599999999996px;width:0.5px;height:8.588px;background:#eef1f5"></div>
<div class="t" style="left:341.5px;top:309.5899999999999px;color:#1e1e1e">Infisso con telaio in metallo con ta...</div>
<div style="left:422.6px;top:304.89599999999996px;width:0.5px;height:8.588px;background:#eef1f5"></div>
<div class="r" style="left:452.1px;top:309.5899999999999px;color:#1e1e1e">3,1</div>
<div style="left:453.6px;top:304.89599999999996px;width:0.5px;height:8.588px;background:#eef1f5"></div>
<div class="t" style="left:455.8px;top:309.5899999999999px;color:#1e1e1e">Ovest</div>
<div style="left:494px;top:304.89599999999996px;width:0.5px;height:8.588px;background:#eef1f5"></div>
<div class="t" style="left:496.2px;top:309.5899999999999px;color:#1e1e1e">Esterno</div>
<div style="left:570px;top:304.89599999999996px;width:0.5px;height:8.588px;background:#eef1f5"></div>
<div class="t" style="left:572.2px;top:309.5899999999999px;color:#1e1e1e">-</div>
<div style="left:605.2px;top:304.89599999999996px;width:0.5px;height:8.588px;background:#eef1f5"></div>
<div class="r" style="left:649.5px;top:309.5899999999999px;color:#1e1e1e">2,10</div>
<div style="left:651px;top:304.89599999999996px;width:0.5px;height:8.588px;background:#eef1f5"></div>
<div style="left:157px;top:313.484px;width:539.4px;height:8.588px;background:#ffffff;border-bottom:0.5px solid #e6ebf1"></div>
<div class="t" style="left:159.7px;top:318.17799999999994px;color:#1e1e1e">Infisso singolo</div>
<div style="left:207px;top:313.484px;width:0.5px;height:8.588px;background:#eef1f5"></div>
<div class="t" style="left:209.2px;top:318.17799999999994px;color:#1e1e1e">Finestra</div>
<div style="left:246px;top:313.484px;width:0.5px;height:8.588px;background:#eef1f5"></div>
<div class="t" style="left:248.2px;top:318.17799999999994px;color:#1e1e1e">INF15</div>
<div style="left:274.6px;top:313.484px;width:0.5px;height:8.588px;background:#eef1f5"></div>
<div class="t" style="left:276.8px;top:318.17799999999994px;color:#1e1e1e">P13</div>
<div style="left:303px;top:313.484px;width:0.5px;height:8.588px;background:#eef1f5"></div>
<div class="t" style="left:305.2px;top:318.17799999999994px;color:#1e1e1e">FE08</div>
<div style="left:339.3px;top:313.484px;width:0.5px;height:8.588px;background:#eef1f5"></div>
<div class="t" style="left:341.5px;top:318.17799999999994px;color:#1e1e1e">Infisso con telaio in metallo con ta...</div>
<div style="left:422.6px;top:313.484px;width:0.5px;height:8.588px;background:#eef1f5"></div>
<div class="r" style="left:452.1px;top:318.17799999999994px;color:#1e1e1e">3,1</div>
<div style="left:453.6px;top:313.484px;width:0.5px;height:8.588px;background:#eef1f5"></div>
<div class="t" style="left:455.8px;top:318.17799999999994px;color:#1e1e1e">Est</div>
<div style="left:494px;top:313.484px;width:0.5px;height:8.588px;background:#eef1f5"></div>
<div class="t" style="left:496.2px;top:318.17799999999994px;color:#1e1e1e">Esterno</div>
<div style="left:570px;top:313.484px;width:0.5px;height:8.588px;background:#eef1f5"></div>
<div class="t" style="left:572.2px;top:318.17799999999994px;color:#1e1e1e">-</div>
<div style="left:605.2px;top:313.484px;width:0.5px;height:8.588px;background:#eef1f5"></div>
<div class="r" style="left:649.5px;top:318.17799999999994px;color:#1e1e1e">2,10</div>
<div style="left:651px;top:313.484px;width:0.5px;height:8.588px;background:#eef1f5"></div>
<div style="left:157px;top:322.072px;width:539.4px;height:8.588px;background:#eff3f9;border-bottom:0.5px solid #e6ebf1"></div>
<div class="t" style="left:159.7px;top:326.76599999999996px;color:#1e1e1e">Parete</div>
<div style="left:207px;top:322.072px;width:0.5px;height:8.588px;background:#eef1f5"></div>
<div class="t" style="left:209.2px;top:326.76599999999996px;color:#1e1e1e">Parete esterna</div>
<div style="left:246px;top:322.072px;width:0.5px;height:8.588px;background:#eef1f5"></div>
<div class="t" style="left:248.2px;top:326.76599999999996px;color:#1e1e1e">P14</div>
<div style="left:274.6px;top:322.072px;width:0.5px;height:8.588px;background:#eef1f5"></div>
<div style="left:303px;top:322.072px;width:0.5px;height:8.588px;background:#eef1f5"></div>
<div class="t" style="left:305.2px;top:326.76599999999996px;color:#1e1e1e">PE58</div>
<div style="left:339.3px;top:322.072px;width:0.5px;height:8.588px;background:#eef1f5"></div>
<div class="t" style="left:341.5px;top:326.76599999999996px;color:#1e1e1e">58 - Parete esterna da 40 cm</div>
<div style="left:422.6px;top:322.072px;width:0.5px;height:8.588px;background:#eef1f5"></div>
<div class="r" style="left:452.1px;top:326.76599999999996px;color:#1e1e1e">1,162</div>
<div style="left:453.6px;top:322.072px;width:0.5px;height:8.588px;background:#eef1f5"></div>
<div class="t" style="left:455.8px;top:326.76599999999996px;color:#1e1e1e">Sud</div>
<div style="left:494px;top:322.072px;width:0.5px;height:8.588px;background:#eef1f5"></div>
<div class="t" style="left:496.2px;top:326.76599999999996px;color:#1e1e1e">Esterno</div>
<div style="left:570px;top:322.072px;width:0.5px;height:8.588px;background:#eef1f5"></div>
<div style="left:605.2px;top:322.072px;width:0.5px;height:8.588px;background:#eef1f5"></div>
<div class="r" style="left:649.5px;top:326.76599999999996px;color:#1e1e1e">3,96</div>
<div style="left:651px;top:322.072px;width:0.5px;height:8.588px;background:#eef1f5"></div>
<div style="left:157px;top:330.65999999999997px;width:539.4px;height:8.588px;background:#ffffff;border-bottom:0.5px solid #e6ebf1"></div>
<div class="t" style="left:159.7px;top:335.3539999999999px;color:#1e1e1e">Parete</div>
<div style="left:207px;top:330.65999999999997px;width:0.5px;height:8.588px;background:#eef1f5"></div>
<div class="t" style="left:209.2px;top:335.3539999999999px;color:#1e1e1e">Parete esterna</div>
<div style="left:246px;top:330.65999999999997px;width:0.5px;height:8.588px;background:#eef1f5"></div>
<div class="t" style="left:248.2px;top:335.3539999999999px;color:#1e1e1e">P15</div>
<div style="left:274.6px;top:330.65999999999997px;width:0.5px;height:8.588px;background:#eef1f5"></div>
<div style="left:303px;top:330.65999999999997px;width:0.5px;height:8.588px;background:#eef1f5"></div>
<div class="t" style="left:305.2px;top:335.3539999999999px;color:#1e1e1e">PE58</div>
<div style="left:339.3px;top:330.65999999999997px;width:0.5px;height:8.588px;background:#eef1f5"></div>
<div class="t" style="left:341.5px;top:335.3539999999999px;color:#1e1e1e">58 - Parete esterna da 40 cm</div>
<div style="left:422.6px;top:330.65999999999997px;width:0.5px;height:8.588px;background:#eef1f5"></div>
<div class="r" style="left:452.1px;top:335.3539999999999px;color:#1e1e1e">1,162</div>
<div style="left:453.6px;top:330.65999999999997px;width:0.5px;height:8.588px;background:#eef1f5"></div>
<div class="t" style="left:455.8px;top:335.3539999999999px;color:#1e1e1e">Est</div>
<div style="left:494px;top:330.65999999999997px;width:0.5px;height:8.588px;background:#eef1f5"></div>
<div class="t" style="left:496.2px;top:335.3539999999999px;color:#1e1e1e">Esterno</div>
<div style="left:570px;top:330.65999999999997px;width:0.5px;height:8.588px;background:#eef1f5"></div>
<div style="left:605.2px;top:330.65999999999997px;width:0.5px;height:8.588px;background:#eef1f5"></div>
<div class="r" style="left:649.5px;top:335.3539999999999px;color:#1e1e1e">8,25</div>
<div style="left:651px;top:330.65999999999997px;width:0.5px;height:8.588px;background:#eef1f5"></div>
<div style="left:157px;top:339.248px;width:539.4px;height:8.588px;background:#eff3f9;border-bottom:0.5px solid #e6ebf1"></div>
<div class="t" style="left:159.7px;top:343.94199999999995px;color:#1e1e1e">Parete</div>
<div style="left:207px;top:339.248px;width:0.5px;height:8.588px;background:#eef1f5"></div>
<div class="t" style="left:209.2px;top:343.94199999999995px;color:#1e1e1e">Parete esterna</div>
<div style="left:246px;top:339.248px;width:0.5px;height:8.588px;background:#eef1f5"></div>
<div class="t" style="left:248.2px;top:343.94199999999995px;color:#1e1e1e">P17</div>
<div style="left:274.6px;top:339.248px;width:0.5px;height:8.588px;background:#eef1f5"></div>
<div style="left:303px;top:339.248px;width:0.5px;height:8.588px;background:#eef1f5"></div>
<div class="t" style="left:305.2px;top:343.94199999999995px;color:#1e1e1e">PE58</div>
<div style="left:339.3px;top:339.248px;width:0.5px;height:8.588px;background:#eef1f5"></div>
<div class="t" style="left:341.5px;top:343.94199999999995px;color:#1e1e1e">58 - Parete esterna da 40 cm</div>
<div style="left:422.6px;top:339.248px;width:0.5px;height:8.588px;background:#eef1f5"></div>
<div class="r" style="left:452.1px;top:343.94199999999995px;color:#1e1e1e">1,162</div>
<div style="left:453.6px;top:339.248px;width:0.5px;height:8.588px;background:#eef1f5"></div>
<div class="t" style="left:455.8px;top:343.94199999999995px;color:#1e1e1e">Ovest</div>
<div style="left:494px;top:339.248px;width:0.5px;height:8.588px;background:#eef1f5"></div>
<div class="t" style="left:496.2px;top:343.94199999999995px;color:#1e1e1e">Esterno</div>
<div style="left:570px;top:339.248px;width:0.5px;height:8.588px;background:#eef1f5"></div>
<div style="left:605.2px;top:339.248px;width:0.5px;height:8.588px;background:#eef1f5"></div>
<div class="r" style="left:649.5px;top:343.94199999999995px;color:#1e1e1e">8,25</div>
<div style="left:651px;top:339.248px;width:0.5px;height:8.588px;background:#eef1f5"></div>
<div style="left:157px;top:347.836px;width:539.4px;height:8.588px;background:#ffffff;border-bottom:0.5px solid #e6ebf1"></div>
<div class="t" style="left:159.7px;top:352.53px;color:#1e1e1e">Parete</div>
<div style="left:207px;top:347.836px;width:0.5px;height:8.588px;background:#eef1f5"></div>
<div class="t" style="left:209.2px;top:352.53px;color:#1e1e1e">Parete esterna</div>
<div style="left:246px;top:347.836px;width:0.5px;height:8.588px;background:#eef1f5"></div>
<div class="t" style="left:248.2px;top:352.53px;color:#1e1e1e">P19</div>
<div style="left:274.6px;top:347.836px;width:0.5px;height:8.588px;background:#eef1f5"></div>
<div style="left:303px;top:347.836px;width:0.5px;height:8.588px;background:#eef1f5"></div>
<div class="t" style="left:305.2px;top:352.53px;color:#1e1e1e">PE58</div>
<div style="left:339.3px;top:347.836px;width:0.5px;height:8.588px;background:#eef1f5"></div>
<div class="t" style="left:341.5px;top:352.53px;color:#1e1e1e">58 - Parete esterna da 40 cm</div>
<div style="left:422.6px;top:347.836px;width:0.5px;height:8.588px;background:#eef1f5"></div>
<div class="r" style="left:452.1px;top:352.53px;color:#1e1e1e">1,162</div>
<div style="left:453.6px;top:347.836px;width:0.5px;height:8.588px;background:#eef1f5"></div>
<div class="t" style="left:455.8px;top:352.53px;color:#1e1e1e">Sud</div>
<div style="left:494px;top:347.836px;width:0.5px;height:8.588px;background:#eef1f5"></div>
<div class="t" style="left:496.2px;top:352.53px;color:#1e1e1e">Esterno</div>
<div style="left:570px;top:347.836px;width:0.5px;height:8.588px;background:#eef1f5"></div>
<div style="left:605.2px;top:347.836px;width:0.5px;height:8.588px;background:#eef1f5"></div>
<div class="r" style="left:649.5px;top:352.53px;color:#1e1e1e">3,96</div>
<div style="left:651px;top:347.836px;width:0.5px;height:8.588px;background:#eef1f5"></div>
<div style="left:157px;top:356.424px;width:539.4px;height:8.588px;background:#eff3f9;border-bottom:0.5px solid #e6ebf1"></div>
<div class="t" style="left:159.7px;top:361.11799999999994px;color:#1e1e1e">Parete</div>
<div style="left:207px;top:356.424px;width:0.5px;height:8.588px;background:#eef1f5"></div>
<div class="t" style="left:209.2px;top:361.11799999999994px;color:#1e1e1e">Parete esterna</div>
<div style="left:246px;top:356.424px;width:0.5px;height:8.588px;background:#eef1f5"></div>
<div class="t" style="left:248.2px;top:361.11799999999994px;color:#1e1e1e">P20</div>
<div style="left:274.6px;top:356.424px;width:0.5px;height:8.588px;background:#eef1f5"></div>
<div style="left:303px;top:356.424px;width:0.5px;height:8.588px;background:#eef1f5"></div>
<div class="t" style="left:305.2px;top:361.11799999999994px;color:#1e1e1e">PE58</div>
<div style="left:339.3px;top:356.424px;width:0.5px;height:8.588px;background:#eef1f5"></div>
<div class="t" style="left:341.5px;top:361.11799999999994px;color:#1e1e1e">58 - Parete esterna da 40 cm</div>
<div style="left:422.6px;top:356.424px;width:0.5px;height:8.588px;background:#eef1f5"></div>
<div class="r" style="left:452.1px;top:361.11799999999994px;color:#1e1e1e">1,162</div>
<div style="left:453.6px;top:356.424px;width:0.5px;height:8.588px;background:#eef1f5"></div>
<div class="t" style="left:455.8px;top:361.11799999999994px;color:#1e1e1e">Sud</div>
<div style="left:494px;top:356.424px;width:0.5px;height:8.588px;background:#eef1f5"></div>
<div class="t" style="left:496.2px;top:361.11799999999994px;color:#1e1e1e">Esterno</div>
<div style="left:570px;top:356.424px;width:0.5px;height:8.588px;background:#eef1f5"></div>
<div style="left:605.2px;top:356.424px;width:0.5px;height:8.588px;background:#eef1f5"></div>
<div class="r" style="left:649.5px;top:361.11799999999994px;color:#1e1e1e">6,34</div>
<div style="left:651px;top:356.424px;width:0.5px;height:8.588px;background:#eef1f5"></div>
<div style="left:157px;top:365.01199999999994px;width:539.4px;height:8.588px;background:#ffffff;border-bottom:0.5px solid #e6ebf1"></div>
<div class="t" style="left:159.7px;top:369.7059999999999px;color:#1e1e1e">Parete</div>
<div style="left:207px;top:365.01199999999994px;width:0.5px;height:8.588px;background:#eef1f5"></div>
<div class="t" style="left:209.2px;top:369.7059999999999px;color:#1e1e1e">Parete esterna</div>
<div style="left:246px;top:365.01199999999994px;width:0.5px;height:8.588px;background:#eef1f5"></div>
<div class="t" style="left:248.2px;top:369.7059999999999px;color:#1e1e1e">P18</div>
<div style="left:274.6px;top:365.01199999999994px;width:0.5px;height:8.588px;background:#eef1f5"></div>
<div style="left:303px;top:365.01199999999994px;width:0.5px;height:8.588px;background:#eef1f5"></div>
<div class="t" style="left:305.2px;top:369.7059999999999px;color:#1e1e1e">PE58</div>
<div style="left:339.3px;top:365.01199999999994px;width:0.5px;height:8.588px;background:#eef1f5"></div>
<div class="t" style="left:341.5px;top:369.7059999999999px;color:#1e1e1e">58 - Parete esterna da 40 cm</div>
<div style="left:422.6px;top:365.01199999999994px;width:0.5px;height:8.588px;background:#eef1f5"></div>
<div class="r" style="left:452.1px;top:369.7059999999999px;color:#1e1e1e">1,162</div>
<div style="left:453.6px;top:365.01199999999994px;width:0.5px;height:8.588px;background:#eef1f5"></div>
<div class="t" style="left:455.8px;top:369.7059999999999px;color:#1e1e1e">Sud</div>
<div style="left:494px;top:365.01199999999994px;width:0.5px;height:8.588px;background:#eef1f5"></div>
<div class="t" style="left:496.2px;top:369.7059999999999px;color:#1e1e1e">Esterno</div>
<div style="left:570px;top:365.01199999999994px;width:0.5px;height:8.588px;background:#eef1f5"></div>
<div style="left:605.2px;top:365.01199999999994px;width:0.5px;height:8.588px;background:#eef1f5"></div>
<div class="r" style="left:649.5px;top:369.7059999999999px;color:#1e1e1e">6,31</div>
<div style="left:651px;top:365.01199999999994px;width:0.5px;height:8.588px;background:#eef1f5"></div>
<div style="left:157px;top:373.6px;width:539.4px;height:8.588px;background:#eff3f9;border-bottom:0.5px solid #e6ebf1"></div>
<div class="t" style="left:159.7px;top:378.294px;color:#1e1e1e">Parete</div>
<div style="left:207px;top:373.6px;width:0.5px;height:8.588px;background:#eef1f5"></div>
<div class="t" style="left:209.2px;top:378.294px;color:#1e1e1e">Parete esterna</div>
<div style="left:246px;top:373.6px;width:0.5px;height:8.588px;background:#eef1f5"></div>
<div class="t" style="left:248.2px;top:378.294px;color:#1e1e1e">P11</div>
<div style="left:274.6px;top:373.6px;width:0.5px;height:8.588px;background:#eef1f5"></div>
<div style="left:303px;top:373.6px;width:0.5px;height:8.588px;background:#eef1f5"></div>
<div class="t" style="left:305.2px;top:378.294px;color:#1e1e1e">PE58</div>
<div style="left:339.3px;top:373.6px;width:0.5px;height:8.588px;background:#eef1f5"></div>
<div class="t" style="left:341.5px;top:378.294px;color:#1e1e1e">58 - Parete esterna da 40 cm</div>
<div style="left:422.6px;top:373.6px;width:0.5px;height:8.588px;background:#eef1f5"></div>
<div class="r" style="left:452.1px;top:378.294px;color:#1e1e1e">1,162</div>
<div style="left:453.6px;top:373.6px;width:0.5px;height:8.588px;background:#eef1f5"></div>
<div class="t" style="left:455.8px;top:378.294px;color:#1e1e1e">Ovest</div>
<div style="left:494px;top:373.6px;width:0.5px;height:8.588px;background:#eef1f5"></div>
<div class="t" style="left:496.2px;top:378.294px;color:#1e1e1e">Esterno</div>
<div style="left:570px;top:373.6px;width:0.5px;height:8.588px;background:#eef1f5"></div>
<div style="left:605.2px;top:373.6px;width:0.5px;height:8.588px;background:#eef1f5"></div>
<div class="r" style="left:649.5px;top:378.294px;color:#1e1e1e">22,56</div>
<div style="left:651px;top:373.6px;width:0.5px;height:8.588px;background:#eef1f5"></div>
<div style="left:157px;top:382.188px;width:539.4px;height:8.588px;background:#ffffff;border-bottom:0.5px solid #e6ebf1"></div>
<div class="t" style="left:159.7px;top:386.88199999999995px;color:#1e1e1e">Parete</div>
<div style="left:207px;top:382.188px;width:0.5px;height:8.588px;background:#eef1f5"></div>
<div class="t" style="left:209.2px;top:386.88199999999995px;color:#1e1e1e">Parete esterna</div>
<div style="left:246px;top:382.188px;width:0.5px;height:8.588px;background:#eef1f5"></div>
<div class="t" style="left:248.2px;top:386.88199999999995px;color:#1e1e1e">P12</div>
<div style="left:274.6px;top:382.188px;width:0.5px;height:8.588px;background:#eef1f5"></div>
<div style="left:303px;top:382.188px;width:0.5px;height:8.588px;background:#eef1f5"></div>
<div class="t" style="left:305.2px;top:386.88199999999995px;color:#1e1e1e">PE58</div>
<div style="left:339.3px;top:382.188px;width:0.5px;height:8.588px;background:#eef1f5"></div>
<div class="t" style="left:341.5px;top:386.88199999999995px;color:#1e1e1e">58 - Parete esterna da 40 cm</div>
<div style="left:422.6px;top:382.188px;width:0.5px;height:8.588px;background:#eef1f5"></div>
<div class="r" style="left:452.1px;top:386.88199999999995px;color:#1e1e1e">1,162</div>
<div style="left:453.6px;top:382.188px;width:0.5px;height:8.588px;background:#eef1f5"></div>
<div class="t" style="left:455.8px;top:386.88199999999995px;color:#1e1e1e">Nord</div>
<div style="left:494px;top:382.188px;width:0.5px;height:8.588px;background:#eef1f5"></div>
<div class="t" style="left:496.2px;top:386.88199999999995px;color:#1e1e1e">Esterno</div>
<div style="left:570px;top:382.188px;width:0.5px;height:8.588px;background:#eef1f5"></div>
<div style="left:605.2px;top:382.188px;width:0.5px;height:8.588px;background:#eef1f5"></div>
<div class="r" style="left:649.5px;top:386.88199999999995px;color:#1e1e1e">21,00</div>
<div style="left:651px;top:382.188px;width:0.5px;height:8.588px;background:#eef1f5"></div>
<div style="left:148.5px;top:158.9px;width:0.6px;height:226.3px;background:#e4e9ef"></div>
<div style="left:156.8px;top:158.9px;width:0.6px;height:226.3px;background:#e8ecf1"></div>
<div style="left:696.4px;top:130.3px;width:8.600000000000023px;height:255px;background:#d9e3ef;border-left:0.5px solid #b9c6d6"></div>
<div style="left:697.3px;top:139px;width:6.6px;height:238px;background:#e4ebf4;border:0.5px solid #c8d4e2;border-radius:1px"></div>
<div class="c" style="left:700.2px;top:135px;font-size:4.5px;color:#2a3a5a">▴</div>
<div class="c" style="left:700.2px;top:381px;font-size:4.5px;color:#2a3a5a">▾</div>
<div style="left:137.7px;top:385.2px;width:567.3px;height:11px;background:linear-gradient(#e8eef6,#dfe7f1);border-top:0.6px solid #b9c6d6;border-bottom:0.6px solid #c0ccda"></div>
<div style="left:651px;top:386px;width:0.6px;height:9px;background:#c0cad6"></div>
<div style="left:697px;top:386px;width:0.6px;height:9px;background:#c0cad6"></div>
<div class="r" style="left:648.5px;top:390.9px;color:#5e6876">686,53</div>
<div class="r" style="left:694px;top:390.9px;color:#5e6876">399,38</div>
<div style="left:137.7px;top:396.4px;width:567.3px;height:12.1px;background:linear-gradient(#e2eaf4,#cad8e9)"></div>
<div class="t" style="left:142.4px;top:404.3px;font-style:italic;color:#3e5275;font-size:4.85px;-webkit-text-stroke-width:0.08px">CTRL + Click per effettuare una selezione multiple</div>
</body></html>
